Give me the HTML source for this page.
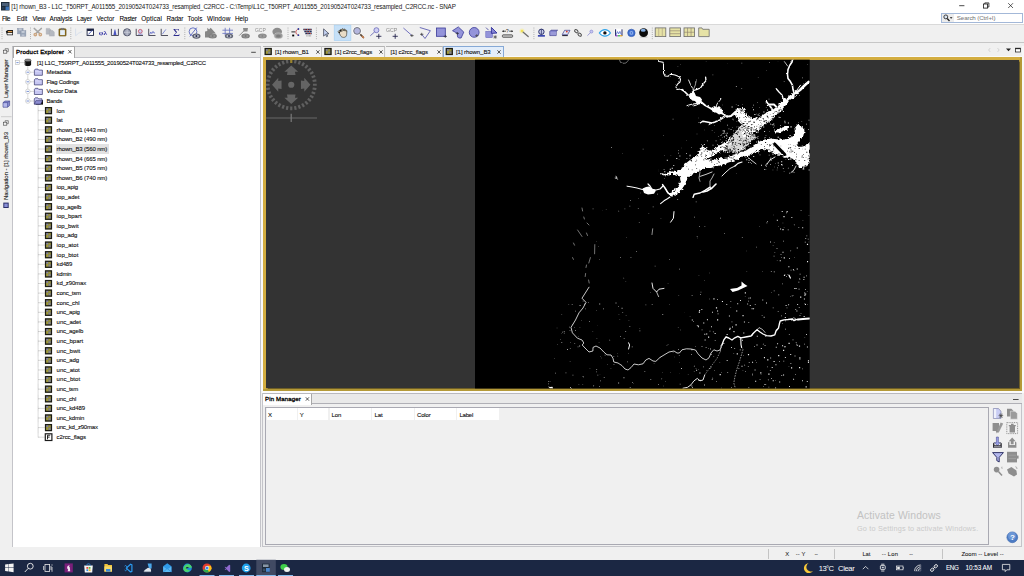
<!DOCTYPE html>
<html>
<head>
<meta charset="utf-8">
<title>SNAP</title>
<style>
html,body{margin:0;padding:0;}
body{width:1024px;height:576px;overflow:hidden;background:#f0f0f0;position:relative;font-family:"Liberation Sans",sans-serif;font-size:6.1px;color:#111;}
.a{position:absolute;}
.t{position:absolute;white-space:nowrap;line-height:1;-webkit-text-stroke:0.11px currentColor;}
svg{position:absolute;overflow:visible;}
#titlebar{left:0;top:0;width:1024px;height:12.5px;background:#fff;}
#menubar{left:0;top:12.5px;width:1024px;height:11.5px;background:#fff;}
#tbline{left:0;top:24px;width:1024px;height:1px;background:#d9d9d9;}
#toolbar{left:0;top:25px;width:1024px;height:17px;background:#f0f0f0;}
#tbline2{left:0;top:42px;width:1024px;height:1px;background:#c6c6c6;}
.menu{top:15.3px;font-size:6.45px;color:#000;}
#pe{left:12.4px;top:56.6px;width:248.7px;height:491.1px;background:#fff;border:1.4px solid #c4c4c9;box-sizing:border-box;}
#petabbar{left:12.4px;top:46.2px;width:248.6px;height:11px;background:#e9e9e9;border-top:0.8px solid #b9b9be;border-left:1.2px solid #c4c4c9;border-right:1.2px solid #c4c4c9;box-sizing:border-box;}
#petab{left:13.4px;top:46.4px;width:61.8px;height:11.2px;background:#fff;border:0.7px solid #a8a8a8;border-bottom:none;box-sizing:border-box;}
.row{position:absolute;white-space:nowrap;font-size:6.0px;line-height:1;color:#111;}
#edtabbar{left:262.4px;top:46.4px;width:759.8px;height:10.8px;background:#f0f0f0;box-sizing:border-box;}
.etab{position:absolute;top:46.4px;height:10.6px;box-sizing:border-box;border-right:0.7px solid #b4b4b4;border-top:0.7px solid #b4b4b4;background:#f3f3f3;}
#pm{left:261.9px;top:392.8px;width:760.6px;height:154.4px;background:#f0f0f0;border:1.2px solid #c4c4c9;box-sizing:border-box;}
#pmbar{left:262.6px;top:393.3px;width:759.2px;height:11.2px;background:#e9e9e9;border-top:0.7px solid #b9b9be;border-bottom:0.8px solid #b0b0b6;box-sizing:border-box;}
#pmtab{left:262.8px;top:393.6px;width:49.6px;height:11px;background:#fff;border-right:0.7px solid #a8a8a8;box-sizing:border-box;}
#taskbar{left:0;top:559.8px;width:1024px;height:16.2px;background:#1b2743;}
</style>
</head>
<body>
<div id="titlebar" class="a"></div><div id="menubar" class="a"></div><div id="tbline" class="a"></div><div id="toolbar" class="a"></div><div id="tbline2" class="a"></div>
<svg style="left:1px;top:2px" width="8.5" height="8.5" viewBox="0 0 17 17"><rect x="0" y="0" width="17" height="17" fill="#1d2b3a"/><rect x="2" y="2" width="13" height="6" fill="#4a5f78"/><rect x="9" y="9" width="7" height="7" fill="#3d74b8"/><rect x="2" y="10" width="5" height="5" fill="#2a3d52"/></svg>
<div class="t" style="left:11.2px;top:3.7px;font-size:6.3px;color:#1a1a1a;letter-spacing:-0.166px;-webkit-text-stroke:0px currentColor;">[1] rhown_B3 - L1C_T50RPT_A011555_20190524T024733_resampled_C2RCC - C:\Temp\L1C_T50RPT_A011555_20190524T024733_resampled_C2RCC.nc - SNAP</div>
<svg style="left:950px;top:0" width="74" height="12" viewBox="0 0 74 12"><g stroke="#1a1a1a" stroke-width="0.8" fill="none"><path d="M9.2 5.7h5.2"/><rect x="33.5" y="4" width="4.1" height="4.1"/><path d="M34.8 4v-1.1h4.1v4.1h-1.3"/><path d="M58.2 3.2l4.8 4.8M63 3.2l-4.8 4.8" stroke-width="0.7"/></g></svg>
<div class="t" style="left:2px;top:16.1px;font-size:6.4px;color:#000;letter-spacing:-0.578px;-webkit-text-stroke:0.06px currentColor;">File</div>
<div class="t" style="left:16.75px;top:16.1px;font-size:6.4px;color:#000;letter-spacing:-0.195px;-webkit-text-stroke:0.06px currentColor;">Edit</div>
<div class="t" style="left:32.4px;top:16.1px;font-size:6.4px;color:#000;letter-spacing:-0.289px;-webkit-text-stroke:0.06px currentColor;">View</div>
<div class="t" style="left:49.5px;top:16.1px;font-size:6.4px;color:#000;letter-spacing:-0.104px;-webkit-text-stroke:0.06px currentColor;">Analysis</div>
<div class="t" style="left:76.75px;top:16.1px;font-size:6.4px;color:#000;letter-spacing:-0.152px;-webkit-text-stroke:0.06px currentColor;">Layer</div>
<div class="t" style="left:96.4px;top:16.1px;font-size:6.4px;color:#000;letter-spacing:-0.007px;-webkit-text-stroke:0.06px currentColor;">Vector</div>
<div class="t" style="left:119.5px;top:16.1px;font-size:6.4px;color:#000;letter-spacing:-0.267px;-webkit-text-stroke:0.06px currentColor;">Raster</div>
<div class="t" style="left:141.25px;top:16.1px;font-size:6.4px;color:#000;letter-spacing:0.119px;-webkit-text-stroke:0.06px currentColor;">Optical</div>
<div class="t" style="left:166.5px;top:16.1px;font-size:6.4px;color:#000;letter-spacing:-0.136px;-webkit-text-stroke:0.06px currentColor;">Radar</div>
<div class="t" style="left:187.5px;top:16.1px;font-size:6.4px;color:#000;letter-spacing:0.012px;-webkit-text-stroke:0.06px currentColor;">Tools</div>
<div class="t" style="left:207px;top:16.1px;font-size:6.4px;color:#000;letter-spacing:0.123px;-webkit-text-stroke:0.06px currentColor;">Window</div>
<div class="t" style="left:235px;top:16.1px;font-size:6.4px;color:#000;letter-spacing:-0.041px;-webkit-text-stroke:0.06px currentColor;">Help</div>
<div class="a" style="left:941px;top:12.7px;width:81.6px;height:10.4px;background:#fff;border:0.8px solid #a3b8d8;box-sizing:border-box;"></div>
<div class="a" style="left:941.8px;top:13.5px;width:12.4px;height:8.8px;background:#ececec;"></div>
<svg style="left:943px;top:14px" width="11" height="8" viewBox="0 0 22 16"><circle cx="5.6" cy="5.8" r="3.9" fill="#dbe6f4" stroke="#222" stroke-width="1.7"/><path d="M8.4 9l4.6 5" stroke="#222" stroke-width="2.6"/><path d="M13.6 6.4h5.4l-2.7 3.2z" fill="#111"/></svg>
<div class="t" style="left:956.8px;top:15.4px;font-size:6.2px;color:#7c7c7c;letter-spacing:-0.119px;-webkit-text-stroke:0.04px currentColor;">Search (Ctrl+I)</div>
<svg style="left:0;top:0" width="1024" height="45" viewBox="0 0 1024 45"><rect x="1.5" y="27.60" width="1" height="0.9" fill="#a9a9a9"/><rect x="1.5" y="29.73" width="1" height="0.9" fill="#a9a9a9"/><rect x="1.5" y="31.86" width="1" height="0.9" fill="#a9a9a9"/><rect x="1.5" y="33.99" width="1" height="0.9" fill="#a9a9a9"/><rect x="1.5" y="36.12" width="1" height="0.9" fill="#a9a9a9"/><rect x="1.5" y="38.25" width="1" height="0.9" fill="#a9a9a9"/><rect x="30.0" y="27.60" width="1" height="0.9" fill="#a9a9a9"/><rect x="30.0" y="29.73" width="1" height="0.9" fill="#a9a9a9"/><rect x="30.0" y="31.86" width="1" height="0.9" fill="#a9a9a9"/><rect x="30.0" y="33.99" width="1" height="0.9" fill="#a9a9a9"/><rect x="30.0" y="36.12" width="1" height="0.9" fill="#a9a9a9"/><rect x="30.0" y="38.25" width="1" height="0.9" fill="#a9a9a9"/><rect x="70.3" y="27.60" width="1" height="0.9" fill="#a9a9a9"/><rect x="70.3" y="29.73" width="1" height="0.9" fill="#a9a9a9"/><rect x="70.3" y="31.86" width="1" height="0.9" fill="#a9a9a9"/><rect x="70.3" y="33.99" width="1" height="0.9" fill="#a9a9a9"/><rect x="70.3" y="36.12" width="1" height="0.9" fill="#a9a9a9"/><rect x="70.3" y="38.25" width="1" height="0.9" fill="#a9a9a9"/><rect x="184.3" y="27.60" width="1" height="0.9" fill="#a9a9a9"/><rect x="184.3" y="29.73" width="1" height="0.9" fill="#a9a9a9"/><rect x="184.3" y="31.86" width="1" height="0.9" fill="#a9a9a9"/><rect x="184.3" y="33.99" width="1" height="0.9" fill="#a9a9a9"/><rect x="184.3" y="36.12" width="1" height="0.9" fill="#a9a9a9"/><rect x="184.3" y="38.25" width="1" height="0.9" fill="#a9a9a9"/><rect x="287.5" y="27.60" width="1" height="0.9" fill="#a9a9a9"/><rect x="287.5" y="29.73" width="1" height="0.9" fill="#a9a9a9"/><rect x="287.5" y="31.86" width="1" height="0.9" fill="#a9a9a9"/><rect x="287.5" y="33.99" width="1" height="0.9" fill="#a9a9a9"/><rect x="287.5" y="36.12" width="1" height="0.9" fill="#a9a9a9"/><rect x="287.5" y="38.25" width="1" height="0.9" fill="#a9a9a9"/><rect x="315.9" y="27.60" width="1" height="0.9" fill="#a9a9a9"/><rect x="315.9" y="29.73" width="1" height="0.9" fill="#a9a9a9"/><rect x="315.9" y="31.86" width="1" height="0.9" fill="#a9a9a9"/><rect x="315.9" y="33.99" width="1" height="0.9" fill="#a9a9a9"/><rect x="315.9" y="36.12" width="1" height="0.9" fill="#a9a9a9"/><rect x="315.9" y="38.25" width="1" height="0.9" fill="#a9a9a9"/><rect x="533.4" y="27.60" width="1" height="0.9" fill="#a9a9a9"/><rect x="533.4" y="29.73" width="1" height="0.9" fill="#a9a9a9"/><rect x="533.4" y="31.86" width="1" height="0.9" fill="#a9a9a9"/><rect x="533.4" y="33.99" width="1" height="0.9" fill="#a9a9a9"/><rect x="533.4" y="36.12" width="1" height="0.9" fill="#a9a9a9"/><rect x="533.4" y="38.25" width="1" height="0.9" fill="#a9a9a9"/><rect x="651.8" y="27.60" width="1" height="0.9" fill="#a9a9a9"/><rect x="651.8" y="29.73" width="1" height="0.9" fill="#a9a9a9"/><rect x="651.8" y="31.86" width="1" height="0.9" fill="#a9a9a9"/><rect x="651.8" y="33.99" width="1" height="0.9" fill="#a9a9a9"/><rect x="651.8" y="36.12" width="1" height="0.9" fill="#a9a9a9"/><rect x="651.8" y="38.25" width="1" height="0.9" fill="#a9a9a9"/><rect x="334.2" y="25.1" width="16.7" height="15.5" fill="#c6e0f7" stroke="#a4cff3" stroke-width="0.6"/><path d="M5.8 31.2l2-1.3h5.2v5.4h-6z" fill="#1a1a1a"/><path d="M7.9 31.1h4.3v1.2h-4.3z" fill="#e0a050"/><path d="M7.4 33h4.9v1.5h-4.9z" fill="#f4f4f4"/><g fill="#9aa6b8" stroke="#8490a4" stroke-width="0.4"><rect x="17.5" y="28.3" width="5.6" height="5.6"/><rect x="20.3" y="30.6" width="5.6" height="5.6"/></g><rect x="18.7" y="28.5" width="3" height="2" fill="#c5ccd8"/><rect x="21.6" y="30.9" width="3" height="2" fill="#c5ccd8"/><rect x="21.8" y="34.4" width="2.6" height="1.6" fill="#b8c0cf"/><g stroke-linecap="round" fill="none"><path d="M34.3 28.5l5.4 5M41.3 28.5l-5.4 5" stroke="#a6a6a6" stroke-width="1.7"/><circle cx="35.3" cy="34.6" r="1.2" stroke="#cda680" stroke-width="1.4"/><circle cx="40.3" cy="34.6" r="1.2" stroke="#cda680" stroke-width="1.4"/></g><g fill="#b4b8c0" stroke="#a2a6ae" stroke-width="0.4"><path d="M46.2 28.4h3.4l1.4 1.4v4.4h-4.8z"/><path d="M49.4 30.6h3.4l1.5 1.5v4h-4.9z"/></g><rect x="58.9" y="28.8" width="7.2" height="7.3" rx="0.8" fill="#8a6c1c" stroke="#5e480e" stroke-width="0.5"/><rect x="60.1" y="30.1" width="4.8" height="5" fill="#e4eef8"/><rect x="61" y="28.1" width="3" height="1.6" fill="#8c8c8c" stroke="#555" stroke-width="0.3"/><path d="M75.6 28.6v7.2M75.6 35.8l3-2.6 3.6-1.6" stroke="#cdd8ea" stroke-width="0.7" fill="none"/><rect x="87.1" y="29" width="6.4" height="6.4" fill="#fff" stroke="#1c2340" stroke-width="0.9"/><path d="M87.1 29h6.4v2h-6.4z" fill="#1c2340"/><path d="M88.4 34.4l4.2-4.4" stroke="#4a5ab0" stroke-width="1"/><text opacity="0.99" x="98.8" y="35" font-family="Liberation Serif" font-size="7" font-weight="bold" fill="#3636a6" textLength="8.3" lengthAdjust="spacingAndGlyphs">φλ</text><path d="M111.4 28.8v6.7h7v-6.7" fill="none" stroke="#2a2a3a" stroke-width="0.8"/><path d="M113.4 35.1l1.2-5.6h0.7l1.2 5.6z" fill="#4a54c0"/><circle cx="127.1" cy="32.3" r="3.6" fill="#9fa4b6" stroke="#3a3f55" stroke-width="0.8"/><path d="M127.1 28.8v7M123.6 32.3h7" stroke="#d6d9e4" stroke-width="0.6"/><path d="M136.2 28.8v6.7h6.8" fill="none" stroke="#2a2a3a" stroke-width="0.8"/><circle cx="140.3" cy="31.3" r="1.9" fill="#c8d0f0" stroke="#c0304a" stroke-width="0.7"/><path d="M138 34.2h4.6" stroke="#4a54c0" stroke-width="0.6"/><path d="M148.7 28.8v6.7h6.8" fill="none" stroke="#2a2a3a" stroke-width="0.8"/><path d="M149.6 34.6l1.2-2.6 1 1.6 1.2-2.2 1 1.8 0.9-0.6" fill="none" stroke="#4a54c0" stroke-width="0.7"/><path d="M161.2 28.8v6.7h6.8" fill="none" stroke="#2a2a3a" stroke-width="0.8"/><path d="M162.3 34.2l3.6-4.8" stroke="#6a78d0" stroke-width="0.8"/><text opacity="0.99" x="173" y="36" font-family="Liberation Serif" font-size="9.6" fill="#2b2b8c" textLength="7" lengthAdjust="spacingAndGlyphs">Σ</text><circle cx="193" cy="31.7" r="3.9" fill="none" stroke="#5c6ac0" stroke-width="0.9"/><path d="M189.8 36.4l7-8.8" stroke="#5c6ac0" stroke-width="0.9"/><ellipse cx="196.4" cy="36.1" rx="4.1" ry="2.6" fill="#5c6070"/><ellipse cx="196.4" cy="36.1" rx="2.542" ry="1.56" fill="#c0c4d0"/><circle cx="196.4" cy="36.1" r="1.04" fill="#2a2f55"/><path d="M205 31.4l2.3-0.4v-3.2l1.8 1.8 1.6-1.8 5.2 5.6h-3.4v2.6l-2.2 1.6h-5.3z" fill="#868686"/><ellipse cx="212.6" cy="36.1" rx="4.3" ry="2.5" fill="#808080"/><ellipse cx="212.6" cy="36.1" rx="2.666" ry="1.5" fill="#959595"/><circle cx="212.6" cy="36.1" r="1.0" fill="#787878"/><path d="M222.4 30.2h10.6M222.4 33.4h10.6M225.2 27.8v7.6M229.6 27.8v7.6" stroke="#6470bf" stroke-width="0.8"/><ellipse cx="229" cy="36.1" rx="4.2" ry="2.5" fill="#666a78"/><ellipse cx="229" cy="36.1" rx="2.604" ry="1.5" fill="#b4b8c4"/><circle cx="229" cy="36.1" r="1.0" fill="#30345a"/><path d="M239.2 35.6l4.6-4.6" stroke="#8a8a8a" stroke-width="1"/><path d="M243 27.9h5l-0.6 3.6h-3.8z" fill="#8a8a8a"/><ellipse cx="245.6" cy="36.1" rx="4.3" ry="2.5" fill="#808080"/><ellipse cx="245.6" cy="36.1" rx="2.666" ry="1.5" fill="#959595"/><circle cx="245.6" cy="36.1" r="1.0" fill="#787878"/><text x="255" y="32.1" font-size="5.2" fill="#8c8c8c" opacity="0.99" textLength="10.8" lengthAdjust="spacingAndGlyphs">GCP</text><ellipse cx="262.4" cy="36" rx="4.4" ry="2.5" fill="#8c8c8c"/><ellipse cx="262.4" cy="36" rx="2.728" ry="1.5" fill="#9c9c9c"/><circle cx="262.4" cy="36" r="1.0" fill="#858585"/><ellipse cx="277.2" cy="31.8" rx="4.8" ry="4" fill="#8c8c8c"/><ellipse cx="278.4" cy="35.8" rx="4.4" ry="2.9" fill="#9a9a9a" stroke="#d4d4d4" stroke-width="0.5"/><ellipse cx="278.4" cy="35.9" rx="2.4" ry="1.5" fill="#7c7c7c"/><path d="M291.4 31.9h4" stroke="#111" stroke-width="0.9"/><path d="M298.6 29.1c-3.6 0.4-3.6 5.6 0 6" fill="none" stroke="#c84040" stroke-width="0.8"/><rect x="292.2" y="34.6" width="2" height="1.8" fill="#000"/><circle cx="298.4" cy="29" r="0.9" fill="#2a3a9a"/><circle cx="298.4" cy="35.2" r="0.9" fill="#2a3a9a"/><g><path d="M303.3 29.5h8.4M304.3 31.5h7.4M305.3 33.5h6.4" stroke="#26305a" stroke-width="1.5"/><path d="M304.4 29.5h1M307 29.5h1M309.6 29.5h1M306.4 31.5h1M309 31.5h1M307.4 33.5h1M310 33.5h1" stroke="#d0503a" stroke-width="1.1"/><path d="M306.4 35.9h5.2" stroke="#555" stroke-width="0.7" stroke-dasharray="0.8 0.5"/></g><path d="M323.6 28.9v7.2l1.9-1.8 1.1 2.4 1.1-0.5-1.1-2.4h2.4z" fill="#c6d4f4" stroke="#34384a" stroke-width="0.7" stroke-linejoin="round"/><path d="M339.6 33.8l-1.3-1.6c-0.6-0.8 0.3-1.7 1.1-1.1l0.5 0.3c-0.3-1.6 0.9-2.4 1.7-1.6 0.2-1.2 1.6-1.3 2-0.3 0.7-0.8 1.9-0.3 1.9 0.7 0.8-0.3 1.5 0.3 1.4 1.2l-0.3 3.4c-0.2 1.7-1.2 2.6-2.9 2.6-1.6 0-2.6-0.7-3.2-1.8z" fill="#e9dcc6" stroke="#4a463e" stroke-width="0.7"/><path d="M339.2 31.4c0.2-1.7 1.6-2.6 2.4-1.8 0.2-1.2 1.6-1.3 2-0.3 0.7-0.8 1.9-0.3 1.9 0.7 0.8-0.3 1.5 0.3 1.4 1.2l-0.1 1.2c-1.4-1.4-3.2-1.6-4.6-0.9-1 0.5-1.8 0.7-3 -0.1z" fill="#6c665a"/><circle cx="340.4" cy="30.6" r="0.7" fill="#111"/><circle cx="339.4" cy="32.6" r="0.7" fill="#111"/><circle cx="342.6" cy="29.9" r="0.5" fill="#d8d4b0"/><circle cx="345.6" cy="31.6" r="0.5" fill="#d8d4b0"/><path d="M359.6 33.6l3.8 3.9" stroke="#5e4a38" stroke-width="1.7" stroke-linecap="round"/><path d="M362.6 36.7l0.8 0.8" stroke="#c47a4a" stroke-width="1.7" stroke-linecap="round"/><circle cx="357.1" cy="30.9" r="3.9" fill="none" stroke="#fff" stroke-width="1.4"/><circle cx="357.1" cy="30.9" r="3.4" fill="#b4b6de" stroke="#74767e" stroke-width="1"/><path d="M370.3 35.8l4.4-4" stroke="#5a5ab0" stroke-width="0.8"/><circle cx="376.4" cy="30.2" r="2.5" fill="#cfcff4" stroke="#5a5ab0" stroke-width="0.7"/><path d="M376.2 36.3h5.2M378.8 33.8v5" stroke="#26264e" stroke-width="0.9"/><text x="386" y="31.9" font-size="5.2" fill="#868686" opacity="0.99" textLength="11.3" lengthAdjust="spacingAndGlyphs">GCP</text><path d="M392.6 36.3h5.2M395.2 33.8v5" stroke="#26264e" stroke-width="0.9"/><path d="M403.4 28l8.4 7.4" stroke="#5252b2" stroke-width="0.8"/><path d="M410.2 35.6h3.4M411.9 34.2v2.8" stroke="#333" stroke-width="0.7"/><path d="M419.8 27.5l10.6 3.2-5.4 7.8-3.3-4.2" fill="none" stroke="#4c4caa" stroke-width="0.8"/><path d="M420 34.3h3.4M421.7 32.8v3" stroke="#333" stroke-width="0.7"/><rect x="436.5" y="28" width="8.8" height="8.3" fill="#9494da" stroke="#3a3a98" stroke-width="0.8"/><path d="M443.6 36.4h3.4M445.3 34.9v3" stroke="#2a2a3a" stroke-width="0.7"/><path d="M452.5 30.7l5.8-3.8 5.5 5.2-2.7 5.9h-2.4c-1.6-1-1.6-3-0.8-4.4z" fill="#9494da" stroke="#3a3a98" stroke-width="0.8" stroke-linejoin="round"/><path d="M455.7 33.4h3.2M457.3 32v2.9" stroke="#2a2a3a" stroke-width="0.7"/><circle cx="474.2" cy="32.4" r="4.9" fill="#9494da" stroke="#3a3a98" stroke-width="0.8"/><path d="M475.2 35.6h3.2M476.8 34.1v3" stroke="#444" stroke-width="0.7"/><path d="M486 27.6l2.6 2.6" stroke="#3a3a98" stroke-width="0.8"/><rect x="485.8" y="31.4" width="6.6" height="6.2" fill="#9494da" stroke="#5a5ab8" stroke-width="0.5"/><path d="M491.4 27.4v6l5.6-0.4z" fill="#8484d4" stroke="#30309a" stroke-width="0.9" stroke-linejoin="round"/><path d="M493.4 37h3.6M495.2 35.2v3.6M493.9 35.7l2.6 2.6M496.5 35.7l-2.6 2.6" stroke="#555" stroke-width="0.7"/><rect x="501.8" y="34.2" width="11.4" height="3.6" rx="1" fill="#fff"/><rect x="502.4" y="34.8" width="10.2" height="2.5" rx="0.7" fill="#c4c4c4" stroke="#2a2a2a" stroke-width="0.7"/><path d="M502.4 31.2h3.6M509.2 31.2h3.6" stroke="#111" stroke-width="0.7"/><path d="M502.2 31.2l1.5-1v2zM513 31.2l-1.5-1v2z" fill="#111"/><text x="506" y="32.6" font-size="4.8" fill="#111">?</text><circle cx="522" cy="31" r="2.6" fill="#f7ee9a" opacity="0.55"/><circle cx="522" cy="31" r="1.3" fill="#f2e25a"/><path d="M523.2 32.2l5 4.4" stroke="#6e6e6e" stroke-width="1.3" stroke-linecap="round"/><circle cx="541.4" cy="31.8" r="2.7" fill="#c6cbe8" stroke="#1c2260" stroke-width="0.9"/><path d="M541.4 29.2v5.2" stroke="#1c2260" stroke-width="0.7"/><rect x="537.9" y="35" width="7" height="1.7" fill="#3c48b0"/><path d="M551 30.2h6.6l-1.4 1.2v4.2h-6.4v-4.2z" fill="#7878c8" stroke="#3c3c8c" stroke-width="0.7"/><path d="M550.3 31.6h5.8v3.6h-5.8z" fill="#9a9ad8"/><path d="M564.6 30.3h5.4l-2.4 4.4h-5.4z" fill="#dfe4f4" stroke="#3c3c8c" stroke-width="0.7"/><path d="M562.2 35.6h5.6" stroke="#1a1a2a" stroke-width="1"/><circle cx="566.8" cy="31.6" r="0.9" fill="#d83a2a"/><g fill="none" stroke="#4a4a4a" stroke-width="1.05"><ellipse cx="576.3" cy="31.2" rx="1.9" ry="1.3" transform="rotate(40 576.3 31.2)"/><ellipse cx="579.7" cy="34.6" rx="1.9" ry="1.3" transform="rotate(40 579.7 34.6)"/></g><path d="M577.2 32.1l1.7 1.7" stroke="#888" stroke-width="0.9"/><path d="M587.4 35.7l3.4-3.4" stroke="#8a8ad0" stroke-width="0.8"/><circle cx="591.4" cy="31.6" r="1.5" fill="#c8c8f2" stroke="#8080cc" stroke-width="0.6"/><path d="M599.3 33c3.2-4.4 8.2-4.4 11.2 0-3 4.2-8 4.2-11.2 0z" fill="#fff" stroke="#31a4ea" stroke-width="1.2"/><circle cx="604.9" cy="32.9" r="1.7" fill="#111"/><rect x="614.6" y="28.6" width="8.4" height="8" fill="#fff"/><path d="M615.6 29.3v6.6M622 29.3v6.6" stroke="#1c2260" stroke-width="1"/><path d="M616.3 34.6l1.2-3 1.2 2.2 1.2-2.4 1.3 3.2" fill="none" stroke="#3a58c8" stroke-width="0.7"/><rect x="615.4" y="35.2" width="2.3" height="1.2" fill="#8a2ad0"/><rect x="617.7" y="35.2" width="2.3" height="1.2" fill="#28b040"/><rect x="620" y="35.2" width="2.4" height="1.2" fill="#e0a020"/><circle cx="631.4" cy="32.9" r="3.7" fill="#3f6fd0" stroke="#2a50a8" stroke-width="0.6"/><circle cx="631.4" cy="32.9" r="1.9" fill="#8fb0ec"/><circle cx="631.4" cy="32.9" r="0.8" fill="#3f6fd0"/><ellipse cx="643.6" cy="37" rx="4" ry="0.9" fill="#d0d0d0"/><circle cx="643.6" cy="32.7" r="4.4" fill="#0a0a0a"/><ellipse cx="643.2" cy="30.2" rx="2.5" ry="1.5" fill="#86b0e4"/><rect x="655.2" y="27.9" width="10.6" height="8.7" fill="#e6e2a6" stroke="#6c6c6c" stroke-width="0.8"/><path d="M658.7333333333333 27.9v8.7M662.2666666666668 27.9v8.7" stroke="#a89a80" stroke-width="0.6"/><rect x="669.8" y="27.9" width="10.6" height="8.7" fill="#e6e2a6" stroke="#6c6c6c" stroke-width="0.8"/><path d="M669.8 30.799999999999997h10.6M669.8 33.699999999999996h10.6" stroke="#8a7a6a" stroke-width="0.6"/><rect x="684" y="27.9" width="10.6" height="8.7" fill="#e6e2a6" stroke="#6c6c6c" stroke-width="0.8"/><path d="M684 32.25h10.6M687.5333333333333 27.9v8.7M691.0666666666667 27.9v8.7" stroke="#8a7a6a" stroke-width="0.6"/><path d="M698.7 27.9h3.2l0.8 1.4h6.5v7.3h-10.5z" fill="#e6e2a6" stroke="#6c6c6c" stroke-width="0.8"/></svg>
<svg style="left:0;top:0" width="13" height="576" viewBox="0 0 13 576"><g fill="none" stroke="#444" stroke-width="0.6"><rect x="3.6" y="50.2" width="3.2" height="3"/><path d="M5.1 50.2v-1.5h3.2v3h-1.5"/></g><g fill="none" stroke="#444" stroke-width="0.6"><rect x="3.6" y="122.19999999999999" width="3.2" height="3"/><path d="M5.1 122.19999999999999v-1.5h3.2v3h-1.5"/></g><path d="M1 116.7h10.6" stroke="#bdbdbd" stroke-width="0.7"/><path d="M3 102.6l2-1.6h4.6v4.6l-2 1.6h-4.6z" fill="#8a8fd0" stroke="#3a3f8a" stroke-width="0.6"/><path d="M3 102.6h4.6v4.6M7.6 102.6l2-1.6" fill="none" stroke="#3a3f8a" stroke-width="0.5"/><rect x="3.5" y="103.2" width="3.6" height="3.5" fill="#b4b8ea"/><rect x="3.3" y="202.6" width="5.4" height="5.4" fill="#2a2f6a"/><rect x="4.3" y="203.6" width="3.4" height="3.4" fill="#8a90d8"/></svg>
<div class="t" style="left:6.3px;top:98px;font-size:6.0px;letter-spacing:-0.151px;transform-origin:0 0;transform:rotate(-90deg) translateY(-50%);color:#1a1a1a;">Layer Manager</div>
<div class="t" style="left:6.3px;top:199.8px;font-size:6.0px;letter-spacing:-0.042px;transform-origin:0 0;transform:rotate(-90deg) translateY(-50%);color:#1a1a1a;">Navigation - [1] rhown_B3</div>
<div id="petabbar" class="a"></div><div id="pe" class="a"></div><div id="petab" class="a"></div>
<div class="t" style="left:16px;top:49.3px;font-size:6.1px;color:#000;letter-spacing:0.179px;-webkit-text-stroke:0.3px currentColor;">Product Explorer</div>
<svg style="left:0;top:0" width="262" height="60" viewBox="0 0 262 60"><path d="M68.3 50l3.2 3.4M71.5 50l-3.2 3.4" stroke="#222" stroke-width="0.75"/><path d="M251.2 52.3h4.6" stroke="#222" stroke-width="0.8"/></svg>
<div class="t" style="left:37px;top:59.5px;font-size:6.0px;color:#111;letter-spacing:-0.224px;">[1] L1C_T50RPT_A011555_20190524T024733_resampled_C2RCC</div>
<div class="t" style="left:46.6px;top:69.105px;font-size:6.0px;color:#111;letter-spacing:-0.077px;">Metadata</div>
<div class="t" style="left:46.6px;top:78.71000000000001px;font-size:6.0px;color:#111;letter-spacing:-0.246px;">Flag Codings</div>
<div class="t" style="left:46.6px;top:88.31500000000001px;font-size:6.0px;color:#111;letter-spacing:-0.096px;">Vector Data</div>
<div class="t" style="left:46.6px;top:97.92000000000002px;font-size:6.0px;color:#111;letter-spacing:-0.343px;">Bands</div>
<div class="t" style="left:56.6px;top:107.53px;font-size:6.0px;color:#111;letter-spacing:-0.036px;">lon</div>
<div class="t" style="left:56.6px;top:117.13px;font-size:6.0px;color:#111;letter-spacing:-0.079px;">lat</div>
<div class="t" style="left:56.6px;top:126.74px;font-size:6.0px;color:#111;letter-spacing:-0.129px;">rhown_B1 (443 nm)</div>
<div class="t" style="left:56.6px;top:136.34px;font-size:6.0px;color:#111;letter-spacing:-0.129px;">rhown_B2 (490 nm)</div>
<div class="a" style="left:55.8px;top:144.35px;width:53px;height:9.5px;background:#e2e2e2;"></div>
<div class="t" style="left:56.6px;top:145.95px;font-size:6.0px;color:#111;letter-spacing:-0.129px;">rhown_B3 (560 nm)</div>
<div class="t" style="left:56.6px;top:155.55px;font-size:6.0px;color:#111;letter-spacing:-0.129px;">rhown_B4 (665 nm)</div>
<div class="t" style="left:56.6px;top:165.16px;font-size:6.0px;color:#111;letter-spacing:-0.129px;">rhown_B5 (705 nm)</div>
<div class="t" style="left:56.6px;top:174.76px;font-size:6.0px;color:#111;letter-spacing:-0.129px;">rhown_B6 (740 nm)</div>
<div class="t" style="left:56.6px;top:184.37px;font-size:6.0px;color:#111;letter-spacing:-0.161px;">iop_apig</div>
<div class="t" style="left:56.6px;top:193.97px;font-size:6.0px;color:#111;letter-spacing:-0.028px;">iop_adet</div>
<div class="t" style="left:56.6px;top:203.58px;font-size:6.0px;color:#111;letter-spacing:-0.147px;">iop_agelb</div>
<div class="t" style="left:56.6px;top:213.18px;font-size:6.0px;color:#111;letter-spacing:-0.002px;">iop_bpart</div>
<div class="t" style="left:56.6px;top:222.78px;font-size:6.0px;color:#111;letter-spacing:0.011px;">iop_bwit</div>
<div class="t" style="left:56.6px;top:232.39px;font-size:6.0px;color:#111;letter-spacing:-0.094px;">iop_adg</div>
<div class="t" style="left:56.6px;top:242.0px;font-size:6.0px;color:#111;letter-spacing:0.056px;">iop_atot</div>
<div class="t" style="left:56.6px;top:251.6px;font-size:6.0px;color:#111;letter-spacing:0.056px;">iop_btot</div>
<div class="t" style="left:56.6px;top:261.2px;font-size:6.0px;color:#111;letter-spacing:-0.15px;">kd489</div>
<div class="t" style="left:56.6px;top:270.81px;font-size:6.0px;color:#111;letter-spacing:-0.241px;">kdmin</div>
<div class="t" style="left:56.6px;top:280.42px;font-size:6.0px;color:#111;letter-spacing:-0.143px;">kd_z90max</div>
<div class="t" style="left:56.6px;top:290.02px;font-size:6.0px;color:#111;letter-spacing:-0.172px;">conc_tsm</div>
<div class="t" style="left:56.6px;top:299.62px;font-size:6.0px;color:#111;letter-spacing:-0.11px;">conc_chl</div>
<div class="t" style="left:56.6px;top:309.23px;font-size:6.0px;color:#111;letter-spacing:-0.144px;">unc_apig</div>
<div class="t" style="left:56.6px;top:318.84px;font-size:6.0px;color:#111;letter-spacing:-0.049px;">unc_adet</div>
<div class="t" style="left:56.6px;top:328.44px;font-size:6.0px;color:#111;letter-spacing:-0.132px;">unc_agelb</div>
<div class="t" style="left:56.6px;top:338.05px;font-size:6.0px;color:#111;letter-spacing:-0.021px;">unc_bpart</div>
<div class="t" style="left:56.6px;top:347.65px;font-size:6.0px;color:#111;letter-spacing:-0.01px;">unc_bwit</div>
<div class="t" style="left:56.6px;top:357.25px;font-size:6.0px;color:#111;letter-spacing:-0.075px;">unc_adg</div>
<div class="t" style="left:56.6px;top:366.86px;font-size:6.0px;color:#111;letter-spacing:0.023px;">unc_atot</div>
<div class="t" style="left:56.6px;top:376.47px;font-size:6.0px;color:#111;letter-spacing:0.073px;">unc_btot</div>
<div class="t" style="left:56.6px;top:386.07px;font-size:6.0px;color:#111;letter-spacing:-0.182px;">unc_tsm</div>
<div class="t" style="left:56.6px;top:395.68px;font-size:6.0px;color:#111;letter-spacing:-0.154px;">unc_chl</div>
<div class="t" style="left:56.6px;top:405.28px;font-size:6.0px;color:#111;letter-spacing:-0.118px;">unc_kd489</div>
<div class="t" style="left:56.6px;top:414.88px;font-size:6.0px;color:#111;letter-spacing:-0.157px;">unc_kdmin</div>
<div class="t" style="left:56.6px;top:424.49px;font-size:6.0px;color:#111;letter-spacing:-0.2px;">unc_kd_z90max</div>
<div class="t" style="left:56.6px;top:434.1px;font-size:6.0px;color:#111;letter-spacing:-0.086px;">c2rcc_flags</div>
<svg style="left:0;top:0" width="262" height="450" viewBox="0 0 262 450"><path d="M27.8 66.1V98.62" stroke="#808080" stroke-width="0.6" stroke-dasharray="0.55 0.55"/><path d="M19.6 62.6H24.5" stroke="#808080" stroke-width="0.6" stroke-dasharray="0.55 0.55"/><path d="M38.1 104.62V437.19500000000005" stroke="#808080" stroke-width="0.6" stroke-dasharray="0.55 0.55"/><rect x="15.4" y="60.5" width="4.1" height="4.1" fill="#fff" stroke="#b4b4b4" stroke-width="0.55"/><path d="M16.4 62.6h2.2" stroke="#4468c8" stroke-width="0.7"/><path d="M24.7 60.4v4.4c0 1.6 6.4 1.6 6.4 0v-4.4z" fill="#111"/><ellipse cx="27.9" cy="60.300000000000004" rx="3.2" ry="1.3" fill="#8d8d8d" stroke="#222" stroke-width="0.4"/><path d="M25.4 61.800000000000004v3.6" stroke="#666" stroke-width="0.6"/><path d="M30.4 72.205H34" stroke="#808080" stroke-width="0.6" stroke-dasharray="0.55 0.55"/><circle cx="27.8" cy="72.205" r="2.3" fill="#fff" stroke="#b8b8b8" stroke-width="0.55"/><path d="M26.5 72.205h2.6" stroke="#5a78cc" stroke-width="0.8"/><path d="M34.4 70.105l0.9-1h2.6l0.8 1h3.7v5.2h-8z" fill="#c6c6f2" stroke="#2a2a62" stroke-width="0.65" stroke-linejoin="round"/><path d="M35.2 71.30499999999999h6.4" stroke="#e6e6fb" stroke-width="0.6"/><path d="M30.4 81.81H34" stroke="#808080" stroke-width="0.6" stroke-dasharray="0.55 0.55"/><circle cx="27.8" cy="81.81" r="2.3" fill="#fff" stroke="#b8b8b8" stroke-width="0.55"/><path d="M26.5 81.81h2.6" stroke="#5a78cc" stroke-width="0.8"/><path d="M34.4 79.71000000000001l0.9-1h2.6l0.8 1h3.7v5.2h-8z" fill="#c6c6f2" stroke="#2a2a62" stroke-width="0.65" stroke-linejoin="round"/><path d="M35.2 80.91h6.4" stroke="#e6e6fb" stroke-width="0.6"/><path d="M30.4 91.415H34" stroke="#808080" stroke-width="0.6" stroke-dasharray="0.55 0.55"/><circle cx="27.8" cy="91.415" r="2.3" fill="#fff" stroke="#b8b8b8" stroke-width="0.55"/><path d="M26.5 91.415h2.6" stroke="#5a78cc" stroke-width="0.8"/><path d="M34.4 89.31500000000001l0.9-1h2.6l0.8 1h3.7v5.2h-8z" fill="#c6c6f2" stroke="#2a2a62" stroke-width="0.65" stroke-linejoin="round"/><path d="M35.2 90.515h6.4" stroke="#e6e6fb" stroke-width="0.6"/><path d="M30.4 101.02000000000001H34" stroke="#808080" stroke-width="0.6" stroke-dasharray="0.55 0.55"/><circle cx="27.8" cy="101.02000000000001" r="2.3" fill="#fff" stroke="#b8b8b8" stroke-width="0.55"/><path d="M26.5 101.02000000000001h2.6" stroke="#5a78cc" stroke-width="0.8"/><path d="M36 100.02000000000001h7v4.6h-7z" fill="#111"/><path d="M34.3 98.82000000000001l0.9-1h2.6l0.8 1h3.4v1.8l-1.6 3.6h-6.1z" fill="#c6c6f2" stroke="#2a2a62" stroke-width="0.65" stroke-linejoin="round"/><path d="M34.4 104.02000000000001l1.5-3.4h6.6l-1.8 3.4z" fill="#8c8cd0" stroke="#2a2a62" stroke-width="0.5"/><path d="M38.4 110.625H45" stroke="#808080" stroke-width="0.6" stroke-dasharray="0.55 0.55"/><rect x="45" y="107.125" width="7" height="7" fill="#7f7d5a"/><rect x="46" y="110.025" width="2.2" height="3" fill="#a09a3a"/><rect x="48.4" y="108.025" width="2.4" height="2.4" fill="#99933c"/><rect x="46.2" y="108.025" width="1.8" height="1.8" fill="#8585ac"/><rect x="48.6" y="110.825" width="2.2" height="2.2" fill="#86868e"/><rect x="45.5" y="107.625" width="6" height="6" fill="none" stroke="#1c1c14" stroke-width="1.2"/><path d="M38.4 120.23H45" stroke="#808080" stroke-width="0.6" stroke-dasharray="0.55 0.55"/><rect x="45" y="116.73" width="7" height="7" fill="#7f7d5a"/><rect x="46" y="119.63000000000001" width="2.2" height="3" fill="#a09a3a"/><rect x="48.4" y="117.63000000000001" width="2.4" height="2.4" fill="#99933c"/><rect x="46.2" y="117.63000000000001" width="1.8" height="1.8" fill="#8585ac"/><rect x="48.6" y="120.43" width="2.2" height="2.2" fill="#86868e"/><rect x="45.5" y="117.23" width="6" height="6" fill="none" stroke="#1c1c14" stroke-width="1.2"/><path d="M38.4 129.835H45" stroke="#808080" stroke-width="0.6" stroke-dasharray="0.55 0.55"/><rect x="45" y="126.33500000000001" width="7" height="7" fill="#7f7d5a"/><rect x="46" y="129.235" width="2.2" height="3" fill="#a09a3a"/><rect x="48.4" y="127.23500000000001" width="2.4" height="2.4" fill="#99933c"/><rect x="46.2" y="127.23500000000001" width="1.8" height="1.8" fill="#8585ac"/><rect x="48.6" y="130.035" width="2.2" height="2.2" fill="#86868e"/><rect x="45.5" y="126.83500000000001" width="6" height="6" fill="none" stroke="#1c1c14" stroke-width="1.2"/><path d="M38.4 139.44H45" stroke="#808080" stroke-width="0.6" stroke-dasharray="0.55 0.55"/><rect x="45" y="135.94" width="7" height="7" fill="#7f7d5a"/><rect x="46" y="138.84" width="2.2" height="3" fill="#a09a3a"/><rect x="48.4" y="136.84" width="2.4" height="2.4" fill="#99933c"/><rect x="46.2" y="136.84" width="1.8" height="1.8" fill="#8585ac"/><rect x="48.6" y="139.64" width="2.2" height="2.2" fill="#86868e"/><rect x="45.5" y="136.44" width="6" height="6" fill="none" stroke="#1c1c14" stroke-width="1.2"/><path d="M38.4 149.04500000000002H45" stroke="#808080" stroke-width="0.6" stroke-dasharray="0.55 0.55"/><rect x="45" y="145.54500000000002" width="7" height="7" fill="#7f7d5a"/><rect x="46" y="148.44500000000002" width="2.2" height="3" fill="#a09a3a"/><rect x="48.4" y="146.44500000000002" width="2.4" height="2.4" fill="#99933c"/><rect x="46.2" y="146.44500000000002" width="1.8" height="1.8" fill="#8585ac"/><rect x="48.6" y="149.245" width="2.2" height="2.2" fill="#86868e"/><rect x="45.5" y="146.04500000000002" width="6" height="6" fill="none" stroke="#1c1c14" stroke-width="1.2"/><path d="M38.4 158.65H45" stroke="#808080" stroke-width="0.6" stroke-dasharray="0.55 0.55"/><rect x="45" y="155.15" width="7" height="7" fill="#7f7d5a"/><rect x="46" y="158.05" width="2.2" height="3" fill="#a09a3a"/><rect x="48.4" y="156.05" width="2.4" height="2.4" fill="#99933c"/><rect x="46.2" y="156.05" width="1.8" height="1.8" fill="#8585ac"/><rect x="48.6" y="158.85" width="2.2" height="2.2" fill="#86868e"/><rect x="45.5" y="155.65" width="6" height="6" fill="none" stroke="#1c1c14" stroke-width="1.2"/><path d="M38.4 168.255H45" stroke="#808080" stroke-width="0.6" stroke-dasharray="0.55 0.55"/><rect x="45" y="164.755" width="7" height="7" fill="#7f7d5a"/><rect x="46" y="167.655" width="2.2" height="3" fill="#a09a3a"/><rect x="48.4" y="165.655" width="2.4" height="2.4" fill="#99933c"/><rect x="46.2" y="165.655" width="1.8" height="1.8" fill="#8585ac"/><rect x="48.6" y="168.45499999999998" width="2.2" height="2.2" fill="#86868e"/><rect x="45.5" y="165.255" width="6" height="6" fill="none" stroke="#1c1c14" stroke-width="1.2"/><path d="M38.4 177.86H45" stroke="#808080" stroke-width="0.6" stroke-dasharray="0.55 0.55"/><rect x="45" y="174.36" width="7" height="7" fill="#7f7d5a"/><rect x="46" y="177.26000000000002" width="2.2" height="3" fill="#a09a3a"/><rect x="48.4" y="175.26000000000002" width="2.4" height="2.4" fill="#99933c"/><rect x="46.2" y="175.26000000000002" width="1.8" height="1.8" fill="#8585ac"/><rect x="48.6" y="178.06" width="2.2" height="2.2" fill="#86868e"/><rect x="45.5" y="174.86" width="6" height="6" fill="none" stroke="#1c1c14" stroke-width="1.2"/><path d="M38.4 187.465H45" stroke="#808080" stroke-width="0.6" stroke-dasharray="0.55 0.55"/><rect x="45" y="183.965" width="7" height="7" fill="#7f7d5a"/><rect x="46" y="186.865" width="2.2" height="3" fill="#a09a3a"/><rect x="48.4" y="184.865" width="2.4" height="2.4" fill="#99933c"/><rect x="46.2" y="184.865" width="1.8" height="1.8" fill="#8585ac"/><rect x="48.6" y="187.665" width="2.2" height="2.2" fill="#86868e"/><rect x="45.5" y="184.465" width="6" height="6" fill="none" stroke="#1c1c14" stroke-width="1.2"/><path d="M38.4 197.07H45" stroke="#808080" stroke-width="0.6" stroke-dasharray="0.55 0.55"/><rect x="45" y="193.57" width="7" height="7" fill="#7f7d5a"/><rect x="46" y="196.47" width="2.2" height="3" fill="#a09a3a"/><rect x="48.4" y="194.47" width="2.4" height="2.4" fill="#99933c"/><rect x="46.2" y="194.47" width="1.8" height="1.8" fill="#8585ac"/><rect x="48.6" y="197.26999999999998" width="2.2" height="2.2" fill="#86868e"/><rect x="45.5" y="194.07" width="6" height="6" fill="none" stroke="#1c1c14" stroke-width="1.2"/><path d="M38.4 206.675H45" stroke="#808080" stroke-width="0.6" stroke-dasharray="0.55 0.55"/><rect x="45" y="203.175" width="7" height="7" fill="#7f7d5a"/><rect x="46" y="206.07500000000002" width="2.2" height="3" fill="#a09a3a"/><rect x="48.4" y="204.07500000000002" width="2.4" height="2.4" fill="#99933c"/><rect x="46.2" y="204.07500000000002" width="1.8" height="1.8" fill="#8585ac"/><rect x="48.6" y="206.875" width="2.2" height="2.2" fill="#86868e"/><rect x="45.5" y="203.675" width="6" height="6" fill="none" stroke="#1c1c14" stroke-width="1.2"/><path d="M38.4 216.28H45" stroke="#808080" stroke-width="0.6" stroke-dasharray="0.55 0.55"/><rect x="45" y="212.78" width="7" height="7" fill="#7f7d5a"/><rect x="46" y="215.68" width="2.2" height="3" fill="#a09a3a"/><rect x="48.4" y="213.68" width="2.4" height="2.4" fill="#99933c"/><rect x="46.2" y="213.68" width="1.8" height="1.8" fill="#8585ac"/><rect x="48.6" y="216.48" width="2.2" height="2.2" fill="#86868e"/><rect x="45.5" y="213.28" width="6" height="6" fill="none" stroke="#1c1c14" stroke-width="1.2"/><path d="M38.4 225.885H45" stroke="#808080" stroke-width="0.6" stroke-dasharray="0.55 0.55"/><rect x="45" y="222.385" width="7" height="7" fill="#7f7d5a"/><rect x="46" y="225.285" width="2.2" height="3" fill="#a09a3a"/><rect x="48.4" y="223.285" width="2.4" height="2.4" fill="#99933c"/><rect x="46.2" y="223.285" width="1.8" height="1.8" fill="#8585ac"/><rect x="48.6" y="226.08499999999998" width="2.2" height="2.2" fill="#86868e"/><rect x="45.5" y="222.885" width="6" height="6" fill="none" stroke="#1c1c14" stroke-width="1.2"/><path d="M38.4 235.49H45" stroke="#808080" stroke-width="0.6" stroke-dasharray="0.55 0.55"/><rect x="45" y="231.99" width="7" height="7" fill="#7f7d5a"/><rect x="46" y="234.89000000000001" width="2.2" height="3" fill="#a09a3a"/><rect x="48.4" y="232.89000000000001" width="2.4" height="2.4" fill="#99933c"/><rect x="46.2" y="232.89000000000001" width="1.8" height="1.8" fill="#8585ac"/><rect x="48.6" y="235.69" width="2.2" height="2.2" fill="#86868e"/><rect x="45.5" y="232.49" width="6" height="6" fill="none" stroke="#1c1c14" stroke-width="1.2"/><path d="M38.4 245.095H45" stroke="#808080" stroke-width="0.6" stroke-dasharray="0.55 0.55"/><rect x="45" y="241.595" width="7" height="7" fill="#7f7d5a"/><rect x="46" y="244.495" width="2.2" height="3" fill="#a09a3a"/><rect x="48.4" y="242.495" width="2.4" height="2.4" fill="#99933c"/><rect x="46.2" y="242.495" width="1.8" height="1.8" fill="#8585ac"/><rect x="48.6" y="245.295" width="2.2" height="2.2" fill="#86868e"/><rect x="45.5" y="242.095" width="6" height="6" fill="none" stroke="#1c1c14" stroke-width="1.2"/><path d="M38.4 254.70000000000002H45" stroke="#808080" stroke-width="0.6" stroke-dasharray="0.55 0.55"/><rect x="45" y="251.20000000000002" width="7" height="7" fill="#7f7d5a"/><rect x="46" y="254.10000000000002" width="2.2" height="3" fill="#a09a3a"/><rect x="48.4" y="252.10000000000002" width="2.4" height="2.4" fill="#99933c"/><rect x="46.2" y="252.10000000000002" width="1.8" height="1.8" fill="#8585ac"/><rect x="48.6" y="254.9" width="2.2" height="2.2" fill="#86868e"/><rect x="45.5" y="251.70000000000002" width="6" height="6" fill="none" stroke="#1c1c14" stroke-width="1.2"/><path d="M38.4 264.305H45" stroke="#808080" stroke-width="0.6" stroke-dasharray="0.55 0.55"/><rect x="45" y="260.805" width="7" height="7" fill="#7f7d5a"/><rect x="46" y="263.705" width="2.2" height="3" fill="#a09a3a"/><rect x="48.4" y="261.705" width="2.4" height="2.4" fill="#99933c"/><rect x="46.2" y="261.705" width="1.8" height="1.8" fill="#8585ac"/><rect x="48.6" y="264.505" width="2.2" height="2.2" fill="#86868e"/><rect x="45.5" y="261.305" width="6" height="6" fill="none" stroke="#1c1c14" stroke-width="1.2"/><path d="M38.4 273.91H45" stroke="#808080" stroke-width="0.6" stroke-dasharray="0.55 0.55"/><rect x="45" y="270.41" width="7" height="7" fill="#7f7d5a"/><rect x="46" y="273.31" width="2.2" height="3" fill="#a09a3a"/><rect x="48.4" y="271.31" width="2.4" height="2.4" fill="#99933c"/><rect x="46.2" y="271.31" width="1.8" height="1.8" fill="#8585ac"/><rect x="48.6" y="274.11" width="2.2" height="2.2" fill="#86868e"/><rect x="45.5" y="270.91" width="6" height="6" fill="none" stroke="#1c1c14" stroke-width="1.2"/><path d="M38.4 283.51500000000004H45" stroke="#808080" stroke-width="0.6" stroke-dasharray="0.55 0.55"/><rect x="45" y="280.01500000000004" width="7" height="7" fill="#7f7d5a"/><rect x="46" y="282.915" width="2.2" height="3" fill="#a09a3a"/><rect x="48.4" y="280.915" width="2.4" height="2.4" fill="#99933c"/><rect x="46.2" y="280.915" width="1.8" height="1.8" fill="#8585ac"/><rect x="48.6" y="283.71500000000003" width="2.2" height="2.2" fill="#86868e"/><rect x="45.5" y="280.51500000000004" width="6" height="6" fill="none" stroke="#1c1c14" stroke-width="1.2"/><path d="M38.4 293.12H45" stroke="#808080" stroke-width="0.6" stroke-dasharray="0.55 0.55"/><rect x="45" y="289.62" width="7" height="7" fill="#7f7d5a"/><rect x="46" y="292.52" width="2.2" height="3" fill="#a09a3a"/><rect x="48.4" y="290.52" width="2.4" height="2.4" fill="#99933c"/><rect x="46.2" y="290.52" width="1.8" height="1.8" fill="#8585ac"/><rect x="48.6" y="293.32" width="2.2" height="2.2" fill="#86868e"/><rect x="45.5" y="290.12" width="6" height="6" fill="none" stroke="#1c1c14" stroke-width="1.2"/><path d="M38.4 302.725H45" stroke="#808080" stroke-width="0.6" stroke-dasharray="0.55 0.55"/><rect x="45" y="299.225" width="7" height="7" fill="#7f7d5a"/><rect x="46" y="302.125" width="2.2" height="3" fill="#a09a3a"/><rect x="48.4" y="300.125" width="2.4" height="2.4" fill="#99933c"/><rect x="46.2" y="300.125" width="1.8" height="1.8" fill="#8585ac"/><rect x="48.6" y="302.925" width="2.2" height="2.2" fill="#86868e"/><rect x="45.5" y="299.725" width="6" height="6" fill="none" stroke="#1c1c14" stroke-width="1.2"/><path d="M38.4 312.33000000000004H45" stroke="#808080" stroke-width="0.6" stroke-dasharray="0.55 0.55"/><rect x="45" y="308.83000000000004" width="7" height="7" fill="#7f7d5a"/><rect x="46" y="311.73" width="2.2" height="3" fill="#a09a3a"/><rect x="48.4" y="309.73" width="2.4" height="2.4" fill="#99933c"/><rect x="46.2" y="309.73" width="1.8" height="1.8" fill="#8585ac"/><rect x="48.6" y="312.53000000000003" width="2.2" height="2.2" fill="#86868e"/><rect x="45.5" y="309.33000000000004" width="6" height="6" fill="none" stroke="#1c1c14" stroke-width="1.2"/><path d="M38.4 321.93500000000006H45" stroke="#808080" stroke-width="0.6" stroke-dasharray="0.55 0.55"/><rect x="45" y="318.43500000000006" width="7" height="7" fill="#7f7d5a"/><rect x="46" y="321.33500000000004" width="2.2" height="3" fill="#a09a3a"/><rect x="48.4" y="319.33500000000004" width="2.4" height="2.4" fill="#99933c"/><rect x="46.2" y="319.33500000000004" width="1.8" height="1.8" fill="#8585ac"/><rect x="48.6" y="322.13500000000005" width="2.2" height="2.2" fill="#86868e"/><rect x="45.5" y="318.93500000000006" width="6" height="6" fill="none" stroke="#1c1c14" stroke-width="1.2"/><path d="M38.4 331.54H45" stroke="#808080" stroke-width="0.6" stroke-dasharray="0.55 0.55"/><rect x="45" y="328.04" width="7" height="7" fill="#7f7d5a"/><rect x="46" y="330.94" width="2.2" height="3" fill="#a09a3a"/><rect x="48.4" y="328.94" width="2.4" height="2.4" fill="#99933c"/><rect x="46.2" y="328.94" width="1.8" height="1.8" fill="#8585ac"/><rect x="48.6" y="331.74" width="2.2" height="2.2" fill="#86868e"/><rect x="45.5" y="328.54" width="6" height="6" fill="none" stroke="#1c1c14" stroke-width="1.2"/><path d="M38.4 341.14500000000004H45" stroke="#808080" stroke-width="0.6" stroke-dasharray="0.55 0.55"/><rect x="45" y="337.64500000000004" width="7" height="7" fill="#7f7d5a"/><rect x="46" y="340.545" width="2.2" height="3" fill="#a09a3a"/><rect x="48.4" y="338.545" width="2.4" height="2.4" fill="#99933c"/><rect x="46.2" y="338.545" width="1.8" height="1.8" fill="#8585ac"/><rect x="48.6" y="341.345" width="2.2" height="2.2" fill="#86868e"/><rect x="45.5" y="338.14500000000004" width="6" height="6" fill="none" stroke="#1c1c14" stroke-width="1.2"/><path d="M38.4 350.75000000000006H45" stroke="#808080" stroke-width="0.6" stroke-dasharray="0.55 0.55"/><rect x="45" y="347.25000000000006" width="7" height="7" fill="#7f7d5a"/><rect x="46" y="350.15000000000003" width="2.2" height="3" fill="#a09a3a"/><rect x="48.4" y="348.15000000000003" width="2.4" height="2.4" fill="#99933c"/><rect x="46.2" y="348.15000000000003" width="1.8" height="1.8" fill="#8585ac"/><rect x="48.6" y="350.95000000000005" width="2.2" height="2.2" fill="#86868e"/><rect x="45.5" y="347.75000000000006" width="6" height="6" fill="none" stroke="#1c1c14" stroke-width="1.2"/><path d="M38.4 360.355H45" stroke="#808080" stroke-width="0.6" stroke-dasharray="0.55 0.55"/><rect x="45" y="356.855" width="7" height="7" fill="#7f7d5a"/><rect x="46" y="359.755" width="2.2" height="3" fill="#a09a3a"/><rect x="48.4" y="357.755" width="2.4" height="2.4" fill="#99933c"/><rect x="46.2" y="357.755" width="1.8" height="1.8" fill="#8585ac"/><rect x="48.6" y="360.555" width="2.2" height="2.2" fill="#86868e"/><rect x="45.5" y="357.355" width="6" height="6" fill="none" stroke="#1c1c14" stroke-width="1.2"/><path d="M38.4 369.96000000000004H45" stroke="#808080" stroke-width="0.6" stroke-dasharray="0.55 0.55"/><rect x="45" y="366.46000000000004" width="7" height="7" fill="#7f7d5a"/><rect x="46" y="369.36" width="2.2" height="3" fill="#a09a3a"/><rect x="48.4" y="367.36" width="2.4" height="2.4" fill="#99933c"/><rect x="46.2" y="367.36" width="1.8" height="1.8" fill="#8585ac"/><rect x="48.6" y="370.16" width="2.2" height="2.2" fill="#86868e"/><rect x="45.5" y="366.96000000000004" width="6" height="6" fill="none" stroke="#1c1c14" stroke-width="1.2"/><path d="M38.4 379.56500000000005H45" stroke="#808080" stroke-width="0.6" stroke-dasharray="0.55 0.55"/><rect x="45" y="376.06500000000005" width="7" height="7" fill="#7f7d5a"/><rect x="46" y="378.96500000000003" width="2.2" height="3" fill="#a09a3a"/><rect x="48.4" y="376.96500000000003" width="2.4" height="2.4" fill="#99933c"/><rect x="46.2" y="376.96500000000003" width="1.8" height="1.8" fill="#8585ac"/><rect x="48.6" y="379.76500000000004" width="2.2" height="2.2" fill="#86868e"/><rect x="45.5" y="376.56500000000005" width="6" height="6" fill="none" stroke="#1c1c14" stroke-width="1.2"/><path d="M38.4 389.17H45" stroke="#808080" stroke-width="0.6" stroke-dasharray="0.55 0.55"/><rect x="45" y="385.67" width="7" height="7" fill="#7f7d5a"/><rect x="46" y="388.57" width="2.2" height="3" fill="#a09a3a"/><rect x="48.4" y="386.57" width="2.4" height="2.4" fill="#99933c"/><rect x="46.2" y="386.57" width="1.8" height="1.8" fill="#8585ac"/><rect x="48.6" y="389.37" width="2.2" height="2.2" fill="#86868e"/><rect x="45.5" y="386.17" width="6" height="6" fill="none" stroke="#1c1c14" stroke-width="1.2"/><path d="M38.4 398.77500000000003H45" stroke="#808080" stroke-width="0.6" stroke-dasharray="0.55 0.55"/><rect x="45" y="395.27500000000003" width="7" height="7" fill="#7f7d5a"/><rect x="46" y="398.175" width="2.2" height="3" fill="#a09a3a"/><rect x="48.4" y="396.175" width="2.4" height="2.4" fill="#99933c"/><rect x="46.2" y="396.175" width="1.8" height="1.8" fill="#8585ac"/><rect x="48.6" y="398.975" width="2.2" height="2.2" fill="#86868e"/><rect x="45.5" y="395.77500000000003" width="6" height="6" fill="none" stroke="#1c1c14" stroke-width="1.2"/><path d="M38.4 408.38000000000005H45" stroke="#808080" stroke-width="0.6" stroke-dasharray="0.55 0.55"/><rect x="45" y="404.88000000000005" width="7" height="7" fill="#7f7d5a"/><rect x="46" y="407.78000000000003" width="2.2" height="3" fill="#a09a3a"/><rect x="48.4" y="405.78000000000003" width="2.4" height="2.4" fill="#99933c"/><rect x="46.2" y="405.78000000000003" width="1.8" height="1.8" fill="#8585ac"/><rect x="48.6" y="408.58000000000004" width="2.2" height="2.2" fill="#86868e"/><rect x="45.5" y="405.38000000000005" width="6" height="6" fill="none" stroke="#1c1c14" stroke-width="1.2"/><path d="M38.4 417.985H45" stroke="#808080" stroke-width="0.6" stroke-dasharray="0.55 0.55"/><rect x="45" y="414.485" width="7" height="7" fill="#7f7d5a"/><rect x="46" y="417.385" width="2.2" height="3" fill="#a09a3a"/><rect x="48.4" y="415.385" width="2.4" height="2.4" fill="#99933c"/><rect x="46.2" y="415.385" width="1.8" height="1.8" fill="#8585ac"/><rect x="48.6" y="418.185" width="2.2" height="2.2" fill="#86868e"/><rect x="45.5" y="414.985" width="6" height="6" fill="none" stroke="#1c1c14" stroke-width="1.2"/><path d="M38.4 427.59000000000003H45" stroke="#808080" stroke-width="0.6" stroke-dasharray="0.55 0.55"/><rect x="45" y="424.09000000000003" width="7" height="7" fill="#7f7d5a"/><rect x="46" y="426.99" width="2.2" height="3" fill="#a09a3a"/><rect x="48.4" y="424.99" width="2.4" height="2.4" fill="#99933c"/><rect x="46.2" y="424.99" width="1.8" height="1.8" fill="#8585ac"/><rect x="48.6" y="427.79" width="2.2" height="2.2" fill="#86868e"/><rect x="45.5" y="424.59000000000003" width="6" height="6" fill="none" stroke="#1c1c14" stroke-width="1.2"/><path d="M38.4 437.19500000000005H45" stroke="#808080" stroke-width="0.6" stroke-dasharray="0.55 0.55"/><rect x="45.3" y="433.7950000000001" width="6.6" height="6.7" fill="#fff" stroke="#1c1c1c" stroke-width="1.2"/><path d="M47.5 439.2950000000001v-4.1h2.7M47.5 437.095h2.1" stroke="#222" stroke-width="1" fill="none"/></svg>
<div id="edtabbar" class="a"></div>
<div class="a" style="left:262.5px;top:46.4px;width:59.8px;height:10.6px;background:#f4f4f4;border-top:0.7px solid #b4b4b4;border-right:0.7px solid #c4c4c4;box-sizing:border-box;"></div>
<div class="t" style="left:275px;top:49.3px;font-size:6.0px;color:#111;letter-spacing:-0.13px;">[1] rhown_B1</div>
<div class="a" style="left:322.3px;top:46.4px;width:63.2px;height:10.6px;background:#f4f4f4;border-top:0.7px solid #b4b4b4;border-right:0.7px solid #c4c4c4;box-sizing:border-box;"></div>
<div class="t" style="left:334.8px;top:49.3px;font-size:6.0px;color:#111;letter-spacing:-0.079px;">[1] c2rcc_flags</div>
<div class="a" style="left:385.5px;top:46.4px;width:57.8px;height:10.6px;background:#f4f4f4;border-top:0.7px solid #b4b4b4;border-right:0.7px solid #c4c4c4;box-sizing:border-box;"></div>
<div class="t" style="left:390.5px;top:49.3px;font-size:6.0px;color:#111;letter-spacing:-0.079px;">[1] c2rcc_flags</div>
<div class="a" style="left:443.3px;top:46.4px;width:60.6px;height:10.8px;background:#e3eefb;border:0.7px solid #86a9d6;border-bottom:none;box-sizing:border-box;"></div>
<div class="t" style="left:456px;top:49.3px;font-size:6.0px;color:#111;letter-spacing:-0.063px;">[1] rhown_B3</div>
<svg style="left:0;top:0" width="1024" height="60" viewBox="0 0 1024 60"><rect x="264.7" y="48.0" width="7" height="7" fill="#7f7d5a"/><rect x="265.7" y="50.9" width="2.2" height="3" fill="#a09a3a"/><rect x="268.09999999999997" y="48.9" width="2.4" height="2.4" fill="#99933c"/><rect x="265.9" y="48.9" width="1.8" height="1.8" fill="#8585ac"/><rect x="268.3" y="51.7" width="2.2" height="2.2" fill="#86868e"/><rect x="265.2" y="48.5" width="6" height="6" fill="none" stroke="#1c1c14" stroke-width="1.2"/><path d="M316.29999999999995 50.3l3.2 3.4M319.5 50.3l-3.2 3.4" stroke="#222" stroke-width="0.75"/><rect x="324.5" y="48.0" width="7" height="7" fill="#7f7d5a"/><rect x="325.5" y="50.9" width="2.2" height="3" fill="#a09a3a"/><rect x="327.9" y="48.9" width="2.4" height="2.4" fill="#99933c"/><rect x="325.7" y="48.9" width="1.8" height="1.8" fill="#8585ac"/><rect x="328.1" y="51.7" width="2.2" height="2.2" fill="#86868e"/><rect x="325.0" y="48.5" width="6" height="6" fill="none" stroke="#1c1c14" stroke-width="1.2"/><path d="M379.4 50.3l3.2 3.4M382.6 50.3l-3.2 3.4" stroke="#222" stroke-width="0.75"/><path d="M437.4 50.3l3.2 3.4M440.6 50.3l-3.2 3.4" stroke="#222" stroke-width="0.75"/><rect x="445.8" y="48.0" width="7" height="7" fill="#7f7d5a"/><rect x="446.8" y="50.9" width="2.2" height="3" fill="#a09a3a"/><rect x="449.2" y="48.9" width="2.4" height="2.4" fill="#99933c"/><rect x="447.0" y="48.9" width="1.8" height="1.8" fill="#8585ac"/><rect x="449.40000000000003" y="51.7" width="2.2" height="2.2" fill="#86868e"/><rect x="446.3" y="48.5" width="6" height="6" fill="none" stroke="#1c1c14" stroke-width="1.2"/><path d="M497.4 50.3l3.2 3.4M500.6 50.3l-3.2 3.4" stroke="#222" stroke-width="0.75"/><path d="M990.2 48.1l-1.6 1.9 1.6 1.9M997.6 48.1l1.6 1.9-1.6 1.9" fill="none" stroke="#c6c6c6" stroke-width="0.7"/><path d="M1006 48.6h5l-2.5 2.7z" fill="#222"/><rect x="1015.5" y="48.2" width="4.9" height="3.8" fill="#fff" stroke="#222" stroke-width="0.75"/><path d="M1015.5 48.6h4.9" stroke="#222" stroke-width="1.1"/></svg>
<div class="a" style="left:503.9px;top:56.2px;width:518.3px;height:0.8px;background:#fafafa;"></div>
<div class="a" style="left:260.9px;top:57px;width:1.8px;height:334px;background:#fafafa;"></div>
<div class="a" style="left:262.4px;top:390.9px;width:761.6px;height:2.1px;background:#fbfbfb;"></div>
<div class="a" style="left:1022.2px;top:46px;width:1.8px;height:345px;background:#f8f8f8;"></div>
<div class="a" style="left:262.6px;top:56.9px;width:759.6px;height:334px;background:#b59a38;"></div>
<div class="a" style="left:262.6px;top:56.9px;width:757.2px;height:331.7px;background:#d3ad40;"></div>
<div class="a" style="left:265.7px;top:59.7px;width:753.8px;height:328.7px;background:#333333;box-shadow:0 0 1px 0.5px #6e5e26;"></div>
<svg style="left:0;top:0" width="330" height="130" viewBox="0 0 330 130"><defs><clipPath id="cc"><rect x="265.8" y="59.9" width="70" height="70"/></clipPath></defs><g clip-path="url(#cc)"><path d="M291.25 63.05L291.25 59.25" stroke="#9a8430" stroke-width="2.2"/><path d="M295.02 63.38L295.68 59.64" stroke="#606060" stroke-width="2.2"/><path d="M298.67 64.36L299.97 60.79" stroke="#606060" stroke-width="2.2"/><path d="M302.10 65.96L304.00 62.67" stroke="#606060" stroke-width="2.2"/><path d="M305.20 68.13L307.64 65.22" stroke="#606060" stroke-width="2.2"/><path d="M307.87 70.80L310.78 68.36" stroke="#606060" stroke-width="2.2"/><path d="M310.04 73.90L313.33 72.00" stroke="#606060" stroke-width="2.2"/><path d="M311.64 77.33L315.21 76.03" stroke="#606060" stroke-width="2.2"/><path d="M312.62 80.98L316.36 80.32" stroke="#606060" stroke-width="2.2"/><path d="M312.95 84.75L316.75 84.75" stroke="#606060" stroke-width="2.2"/><path d="M312.62 88.52L316.36 89.18" stroke="#606060" stroke-width="2.2"/><path d="M311.64 92.17L315.21 93.47" stroke="#606060" stroke-width="2.2"/><path d="M310.04 95.60L313.33 97.50" stroke="#606060" stroke-width="2.2"/><path d="M307.87 98.70L310.78 101.14" stroke="#606060" stroke-width="2.2"/><path d="M305.20 101.37L307.64 104.28" stroke="#606060" stroke-width="2.2"/><path d="M302.10 103.54L304.00 106.83" stroke="#606060" stroke-width="2.2"/><path d="M298.67 105.14L299.97 108.71" stroke="#606060" stroke-width="2.2"/><path d="M295.02 106.12L295.68 109.86" stroke="#606060" stroke-width="2.2"/><path d="M291.25 106.45L291.25 110.25" stroke="#606060" stroke-width="2.2"/><path d="M287.48 106.12L286.82 109.86" stroke="#606060" stroke-width="2.2"/><path d="M283.83 105.14L282.53 108.71" stroke="#606060" stroke-width="2.2"/><path d="M280.40 103.54L278.50 106.83" stroke="#606060" stroke-width="2.2"/><path d="M277.30 101.37L274.86 104.28" stroke="#606060" stroke-width="2.2"/><path d="M274.63 98.70L271.72 101.14" stroke="#606060" stroke-width="2.2"/><path d="M272.46 95.60L269.17 97.50" stroke="#606060" stroke-width="2.2"/><path d="M270.86 92.17L267.29 93.47" stroke="#606060" stroke-width="2.2"/><path d="M269.88 88.52L266.14 89.18" stroke="#606060" stroke-width="2.2"/><path d="M269.55 84.75L265.75 84.75" stroke="#606060" stroke-width="2.2"/><path d="M269.88 80.98L266.14 80.32" stroke="#606060" stroke-width="2.2"/><path d="M270.86 77.33L267.29 76.03" stroke="#606060" stroke-width="2.2"/><path d="M272.46 73.90L269.17 72.00" stroke="#606060" stroke-width="2.2"/><path d="M274.63 70.80L271.72 68.36" stroke="#606060" stroke-width="2.2"/><path d="M277.30 68.13L274.86 65.22" stroke="#606060" stroke-width="2.2"/><path d="M280.40 65.96L278.50 62.67" stroke="#606060" stroke-width="2.2"/><path d="M283.83 64.36L282.53 60.79" stroke="#606060" stroke-width="2.2"/><path d="M287.48 63.38L286.82 59.64" stroke="#606060" stroke-width="2.2"/><path transform="rotate(0 291.25 84.75)" d="M291.25 65.55l6.9 6.2h-3.2l0.6 3.3h-8.6l0.6-3.3h-3.2z" fill="#646464"/><path transform="rotate(90 291.25 84.75)" d="M291.25 65.55l6.9 6.2h-3.2l0.6 3.3h-8.6l0.6-3.3h-3.2z" fill="#646464"/><path transform="rotate(180 291.25 84.75)" d="M291.25 65.55l6.9 6.2h-3.2l0.6 3.3h-8.6l0.6-3.3h-3.2z" fill="#646464"/><path transform="rotate(270 291.25 84.75)" d="M291.25 65.55l6.9 6.2h-3.2l0.6 3.3h-8.6l0.6-3.3h-3.2z" fill="#646464"/><circle cx="291.25" cy="84.75" r="3.1" fill="#666"/><path d="M266.2 118h50.8" stroke="#6e6e6e" stroke-width="0.9"/><path d="M291.2 113.8v8.2" stroke="#7a7a7a" stroke-width="1.2"/></g></svg>
<svg style="left:0;top:0" width="1024" height="400" viewBox="0 0 1024 400"><defs><filter id="rough" x="-5%" y="-5%" width="110%" height="110%"><feTurbulence type="fractalNoise" baseFrequency="0.35" numOctaves="2" seed="4" result="n"/><feDisplacementMap in="SourceGraphic" in2="n" scale="4.5" xChannelSelector="R" yChannelSelector="G"/></filter><filter id="rough2" x="-5%" y="-5%" width="110%" height="110%"><feTurbulence type="fractalNoise" baseFrequency="0.6" numOctaves="2" seed="9" result="n"/><feDisplacementMap in="SourceGraphic" in2="n" scale="2.2" xChannelSelector="R" yChannelSelector="G"/></filter><clipPath id="ic"><rect x="475.0" y="59.7" width="334.70000000000005" height="328.7"/></clipPath></defs><rect x="475.0" y="59.7" width="334.70000000000005" height="328.7" fill="#000"/><g clip-path="url(#ic)"><g filter="url(#rough2)"><path d="M657.5 59.7 L659.0 61.5 L663.0 62.2 L663.5 64.0 L663.5 73.0 L665.0 76.0 L668.0 76.2 L671.0 74.2 L675.0 75.0 L679.4 76.8 L680.5 79.5 L680.0 82.0 L677.5 84.2 L676.0 87.0 L677.0 89.5 L681.0 89.0" fill="none" stroke="#fff" stroke-width="1.05" stroke-linecap="round" stroke-linejoin="round" /><path d="M681.0 89.0 L684.0 91.0 L688.0 95.0 L691.0 98.0" fill="none" stroke="#fff" stroke-width="1.7" stroke-linecap="round" stroke-linejoin="round" /><path d="M619.4 59.7 L620.4 62.2 L623.0 63.4 L626.0 63.0 L628.2 60.5 L628.4 59.7" fill="none" stroke="#fff" stroke-width="0.55" stroke-linecap="round" stroke-linejoin="round" opacity="0.75" /><path d="M689.0 94.5 L692.5 91.0 L694.5 92.5 L696.0 96.0 L700.0 97.0 L702.0 99.5 L701.0 102.5 L699.5 104.5 L697.0 103.8 L695.0 101.0 L692.0 100.5 L690.5 98.5Z" fill="#fff"/><path d="M693.5 92.0 L693.0 89.0 L690.5 84.5 L688.6 80.0" fill="none" stroke="#fff" stroke-width="0.9" stroke-linecap="round" stroke-linejoin="round" /><path d="M693.5 89.5 L695.3 85.0 L696.4 79.8" fill="none" stroke="#fff" stroke-width="0.7" stroke-linecap="round" stroke-linejoin="round" opacity="0.85" /><path d="M693.8 90.5 L697.0 89.4 L700.5 88.0 L703.0 84.2 L706.0 80.6 L705.6 77.2" fill="none" stroke="#fff" stroke-width="1.3" stroke-linecap="round" stroke-linejoin="round" /><path d="M697.0 103.4 L692.0 104.2 L687.0 105.6" fill="none" stroke="#fff" stroke-width="1.0" stroke-linecap="round" stroke-linejoin="round" /><path d="M699.0 103.6 L696.5 105.0 L693.8 105.8" fill="none" stroke="#fff" stroke-width="1.0" stroke-linecap="round" stroke-linejoin="round" /><path d="M700.5 101.5 L705.0 105.2 L710.0 108.0 L713.0 110.0" fill="none" stroke="#fff" stroke-width="1.8" stroke-linecap="round" stroke-linejoin="round" /><path d="M711.0 108.0 L714.5 106.0 L717.0 107.5 L719.0 106.0 L721.0 108.0 L722.5 110.5 L723.0 113.5 L719.0 114.5 L716.0 112.5 L713.0 112.5Z" fill="#fff"/><path d="M716.0 108.0 L717.0 104.0 L719.0 101.5 L721.0 99.0" fill="none" stroke="#fff" stroke-width="0.9" stroke-linecap="round" stroke-linejoin="round" /><path d="M721.0 113.0 L724.0 114.5 L727.0 116.8 L731.0 116.0 L735.0 112.2 L738.0 110.0" fill="none" stroke="#fff" stroke-width="1.9" stroke-linecap="round" stroke-linejoin="round" /><path d="M720.0 119.0 L723.5 116.5" fill="none" stroke="#fff" stroke-width="1.0" stroke-linecap="round" stroke-linejoin="round" /><path d="M724.5 117.0 L720.0 119.8 L715.0 122.0 L712.0 123.0 L707.0 122.0 L703.0 121.2 L700.0 123.0" fill="none" stroke="#fff" stroke-width="1.4" stroke-linecap="round" stroke-linejoin="round" /><path d="M712.0 123.0 L709.0 124.6" fill="none" stroke="#fff" stroke-width="0.9" stroke-linecap="round" stroke-linejoin="round" /></g><g filter="url(#rough2)"><path d="M792.5 59.7 L792.0 62.0 L790.0 65.0 L788.0 69.5 L787.5 74.5 L788.0 78.5 L790.4 81.6 L792.4 85.2 L793.0 89.6 L794.2 93.4" fill="none" stroke="#fff" stroke-width="1.6" stroke-linecap="round" stroke-linejoin="round" /><path d="M784.4 61.6 L787.6 66.0" fill="none" stroke="#fff" stroke-width="0.8" stroke-linecap="round" stroke-linejoin="round" opacity="0.9" /><path d="M808.6 81.8 L804.0 86.0 L800.0 90.0 L796.0 93.0" fill="none" stroke="#fff" stroke-width="2.5" stroke-linecap="round" stroke-linejoin="round" /><path d="M800.5 85.2 L798.0 88.5 L796.0 91.5" fill="none" stroke="#fff" stroke-width="1.0" stroke-linecap="round" stroke-linejoin="round" /><path d="M776.2 88.8 L779.0 92.0 L782.0 95.0 L783.0 98.0 L784.2 101.0" fill="none" stroke="#fff" stroke-width="1.3" stroke-linecap="round" stroke-linejoin="round" /><path d="M766.4 101.6 L769.0 105.0 L771.4 108.0 L773.0 111.0 L776.0 113.0" fill="none" stroke="#fff" stroke-width="1.6" stroke-linecap="round" stroke-linejoin="round" /><path d="M769.5 104.5 L774.0 104.5 L777.0 107.5" fill="none" stroke="#fff" stroke-width="1.8" stroke-linecap="round" stroke-linejoin="round" /></g><g filter="url(#rough)"><path d="M796.0 93.0 L792.5 95.8 L789.5 97.8 L786.0 101.0" fill="none" stroke="#fff" stroke-width="3.8" stroke-linecap="round" stroke-linejoin="round" /><path d="M786.0 101.0 L783.0 104.5 L779.0 109.0" fill="none" stroke="#fff" stroke-width="5" stroke-linecap="round" stroke-linejoin="round" /><path d="M779.0 109.0 L773.0 113.5 L768.0 117.0" fill="none" stroke="#fff" stroke-width="6.5" stroke-linecap="round" stroke-linejoin="round" /><path d="M768.0 117.0 L762.0 121.0 L757.0 125.0" fill="none" stroke="#fff" stroke-width="9" stroke-linecap="round" stroke-linejoin="round" /><path d="M757.0 125.0 L752.0 129.0 L747.0 133.0" fill="none" stroke="#fff" stroke-width="10" stroke-linecap="round" stroke-linejoin="round" /><path d="M734.5 114.0 L737.5 108.5 L743.0 108.0 L747.0 114.0 L752.0 118.5 L758.0 117.0 L752.0 126.0 L745.0 127.0 L740.0 123.0 L737.0 119.0Z" fill="#fff"/><path d="M752.0 128.0 L756.0 137.0 L750.0 143.0 L744.0 149.0 L737.0 152.5 L730.0 153.0 L724.0 151.0 L721.0 147.0 L724.0 142.5 L729.0 139.0 L734.0 134.0 L739.0 127.0 L745.0 124.0Z" fill="#fff" opacity="0.84"/><path d="M809.7 143.0 L807.0 143.6 L805.0 146.0 L800.0 147.0 L796.5 144.0 L799.0 141.0 L803.0 137.0 L804.5 131.0 L802.0 126.0 L797.5 124.5 L794.5 128.5 L795.0 134.0 L792.0 137.0 L788.6 138.0 L783.0 140.0 L777.0 139.2 L770.0 138.6 L763.5 139.8 L757.5 142.5 L751.5 147.0 L746.0 150.5 L740.0 152.5 L733.0 155.0 L727.0 157.5 L720.0 158.5 L713.0 160.0 L706.0 159.0 L700.0 160.5 L694.0 163.0 L690.0 160.0 L697.0 156.0 L700.0 150.0 L703.0 144.2 L706.6 150.0 L712.0 150.0 L717.8 146.8 L722.0 143.0 L727.0 140.5 L730.0 143.5 L725.0 148.5 L719.0 152.5 L713.0 156.0 L706.0 159.0 L700.0 160.5 L694.0 163.0 L690.0 160.0 L685.0 164.0 L682.0 168.0 L676.0 172.0 L670.0 171.2 L665.0 174.0 L660.0 173.0 L658.0 170.5 L659.0 172.6 L663.0 175.2 L668.0 175.4 L672.0 173.8 L676.0 174.4 L680.0 176.4 L680.5 180.5 L679.0 185.0 L676.0 189.0 L672.0 192.0 L668.0 193.5 L672.0 196.0 L677.0 194.0 L681.0 190.5 L684.0 186.0 L686.5 181.0 L688.0 176.0 L694.0 173.0 L700.0 171.0 L705.0 168.0 L712.0 168.0 L718.5 166.0 L727.0 163.0 L736.0 160.0 L743.0 156.5 L748.0 156.0 L752.4 153.0 L757.0 151.0 L763.0 149.8 L769.0 151.0 L773.0 153.0 L777.0 155.6 L782.0 156.0 L786.0 158.0 L791.0 157.8 L794.0 160.0 L797.5 163.8 L799.0 168.0 L802.0 168.0 L805.0 165.0 L809.7 164.0Z" fill="#fff"/><path d="M775.0 130.8 L782.0 127.6 L788.5 126.6 L787.0 129.5 L782.0 131.5 L777.0 133.0Z" fill="#fff"/></g><path d="M774.6 144.0 L779.0 148.6 L784.6 154.4" fill="none" stroke="#000" stroke-width="3.0" stroke-linecap="round" stroke-linejoin="round" /><path d="M750.9 124.5h0.7v0.7h-0.7zM761.9 127.7h0.6v0.6h-0.6zM780.4 109.3h0.6v0.6h-0.6zM760.1 127.3h0.7v0.7h-0.7zM763.3 119.1h0.7v0.7h-0.7zM747.5 135.3h1.0v1.0h-1.0zM772.8 113.2h0.9v0.9h-0.9zM766.4 115.7h0.5v0.5h-0.5zM744.1 133.2h0.7v0.7h-0.7zM758.8 126.8h0.6v0.6h-0.6zM761.2 123.7h0.8v0.8h-0.8zM763.3 120.7h0.9v0.9h-0.9zM759.1 125.7h0.5v0.5h-0.5zM756.2 130.0h0.9v0.9h-0.9zM767.3 116.9h0.7v0.7h-0.7zM767.4 116.2h0.7v0.7h-0.7zM777.0 114.1h0.6v0.6h-0.6zM760.0 129.7h0.6v0.6h-0.6zM779.4 111.8h0.7v0.7h-0.7zM748.8 133.4h0.9v0.9h-0.9zM776.5 115.2h0.7v0.7h-0.7zM759.2 120.3h0.7v0.7h-0.7zM767.1 115.8h0.9v0.9h-0.9zM774.3 111.8h0.6v0.6h-0.6zM768.2 117.6h0.6v0.6h-0.6zM777.6 111.8h0.9v0.9h-0.9zM752.4 123.9h0.7v0.7h-0.7zM779.3 108.9h0.8v0.8h-0.8zM756.2 128.0h0.8v0.8h-0.8zM768.7 120.7h0.7v0.7h-0.7zM759.3 129.6h0.7v0.7h-0.7zM751.3 124.2h0.8v0.8h-0.8zM745.7 133.6h0.8v0.8h-0.8zM746.6 132.3h0.5v0.5h-0.5zM780.5 112.1h0.5v0.5h-0.5zM778.7 110.1h0.9v0.9h-0.9zM776.7 107.2h0.9v0.9h-0.9zM744.9 131.5h1.0v1.0h-1.0zM751.5 126.9h0.9v0.9h-0.9zM758.1 118.5h0.7v0.7h-0.7zM756.1 120.2h0.5v0.5h-0.5zM747.4 129.5h0.9v0.9h-0.9zM762.3 127.9h0.9v0.9h-0.9zM763.8 121.1h0.9v0.9h-0.9zM749.2 125.9h0.7v0.7h-0.7zM750.7 129.5h1.0v1.0h-1.0zM753.6 130.0h0.7v0.7h-0.7zM775.6 110.9h1.0v1.0h-1.0zM762.1 126.4h0.7v0.7h-0.7zM765.6 122.4h0.9v0.9h-0.9zM750.8 130.4h0.8v0.8h-0.8zM756.4 125.7h0.8v0.8h-0.8zM760.1 122.5h0.6v0.6h-0.6zM758.0 124.5h0.6v0.6h-0.6zM752.6 128.6h0.6v0.6h-0.6zM757.2 132.3h0.9v0.9h-0.9zM753.6 129.0h0.8v0.8h-0.8zM777.1 115.0h0.9v0.9h-0.9zM762.7 118.0h0.9v0.9h-0.9zM748.4 128.0h0.8v0.8h-0.8zM748.2 136.3h0.8v0.8h-0.8zM745.7 137.7h0.6v0.6h-0.6zM755.3 130.5h0.8v0.8h-0.8zM761.1 116.6h0.6v0.6h-0.6zM780.1 107.4h0.8v0.8h-0.8zM751.4 132.1h0.7v0.7h-0.7zM764.3 125.3h0.6v0.6h-0.6zM751.5 132.6h0.5v0.5h-0.5zM771.6 116.2h0.9v0.9h-0.9zM762.3 126.4h0.9v0.9h-0.9zM764.1 121.7h0.6v0.6h-0.6zM760.4 125.2h1.0v1.0h-1.0zM781.0 110.6h0.9v0.9h-0.9zM746.2 135.2h0.8v0.8h-0.8zM774.0 117.7h0.9v0.9h-0.9zM764.7 120.4h0.8v0.8h-0.8zM754.0 121.8h0.9v0.9h-0.9zM756.9 118.6h0.8v0.8h-0.8zM767.4 113.6h0.5v0.5h-0.5zM749.6 132.6h0.6v0.6h-0.6zM760.6 119.9h0.9v0.9h-0.9zM747.6 127.2h0.7v0.7h-0.7zM773.5 115.4h0.9v0.9h-0.9zM752.2 133.7h0.8v0.8h-0.8zM754.0 126.6h1.0v1.0h-1.0zM779.1 109.9h0.7v0.7h-0.7zM755.4 129.1h1.0v1.0h-1.0zM748.0 131.2h0.9v0.9h-0.9zM772.7 119.2h0.7v0.7h-0.7zM747.1 130.2h0.5v0.5h-0.5zM750.9 134.7h0.8v0.8h-0.8zM773.7 117.3h0.7v0.7h-0.7zM784.0 109.6h0.8v0.8h-0.8zM769.9 114.2h0.5v0.5h-0.5zM747.0 127.9h0.8v0.8h-0.8zM765.9 120.3h0.9v0.9h-0.9zM778.0 109.8h0.5v0.5h-0.5zM781.1 108.9h0.7v0.7h-0.7zM750.2 134.2h0.8v0.8h-0.8zM767.7 121.2h0.6v0.6h-0.6zM777.5 113.0h0.8v0.8h-0.8zM759.5 128.0h0.8v0.8h-0.8zM764.6 120.2h1.0v1.0h-1.0zM744.4 130.6h0.6v0.6h-0.6zM755.9 131.2h0.9v0.9h-0.9zM761.3 123.9h0.8v0.8h-0.8zM753.1 121.7h0.9v0.9h-0.9zM751.2 133.4h0.5v0.5h-0.5zM759.9 117.5h0.5v0.5h-0.5zM759.8 127.3h0.8v0.8h-0.8z" fill="#000"/><path d="M747.8 130.4h0.8v0.8h-0.8zM742.9 145.2h1.0v1.0h-1.0zM742.2 143.5h0.8v0.8h-0.8zM751.3 139.9h0.7v0.7h-0.7zM738.8 136.0h0.9v0.9h-0.9zM731.7 147.6h0.5v0.5h-0.5zM730.8 139.5h0.8v0.8h-0.8zM728.1 142.3h0.7v0.7h-0.7zM733.5 145.7h0.7v0.7h-0.7zM740.5 150.2h0.6v0.6h-0.6zM747.8 141.8h0.6v0.6h-0.6zM731.1 152.0h1.0v1.0h-1.0zM735.4 151.4h0.9v0.9h-0.9zM749.6 132.5h0.6v0.6h-0.6zM734.4 151.9h0.7v0.7h-0.7zM726.9 146.7h0.7v0.7h-0.7zM755.4 136.3h0.6v0.6h-0.6zM726.9 143.6h0.6v0.6h-0.6zM748.1 135.9h1.1v1.1h-1.1zM737.7 131.0h0.7v0.7h-0.7zM729.7 149.8h1.0v1.0h-1.0zM751.4 128.1h0.5v0.5h-0.5zM728.4 149.3h1.0v1.0h-1.0zM753.4 133.8h0.9v0.9h-0.9zM749.0 142.6h1.0v1.0h-1.0zM739.5 143.0h0.9v0.9h-0.9zM730.4 150.8h1.1v1.1h-1.1zM744.4 125.8h0.6v0.6h-0.6zM743.2 140.5h0.9v0.9h-0.9zM725.1 147.5h1.0v1.0h-1.0zM751.7 140.0h1.0v1.0h-1.0zM728.1 143.5h0.7v0.7h-0.7zM737.5 139.3h0.5v0.5h-0.5zM738.1 149.1h0.9v0.9h-0.9zM747.9 139.2h0.5v0.5h-0.5zM734.3 146.8h0.7v0.7h-0.7zM725.0 142.0h1.0v1.0h-1.0zM738.9 136.6h1.0v1.0h-1.0zM748.2 125.9h1.0v1.0h-1.0zM750.3 136.3h1.0v1.0h-1.0zM726.9 149.4h0.6v0.6h-0.6zM732.9 139.7h1.0v1.0h-1.0zM731.9 139.8h0.8v0.8h-0.8zM746.0 138.0h0.5v0.5h-0.5zM729.6 148.6h0.7v0.7h-0.7zM742.9 143.6h0.9v0.9h-0.9zM732.0 150.5h0.8v0.8h-0.8zM752.9 132.9h1.0v1.0h-1.0zM748.5 141.8h0.8v0.8h-0.8zM725.9 146.4h0.7v0.7h-0.7zM744.2 127.9h0.5v0.5h-0.5zM726.0 147.5h0.6v0.6h-0.6zM752.6 134.8h0.8v0.8h-0.8zM733.3 142.0h0.6v0.6h-0.6zM735.1 151.1h0.6v0.6h-0.6zM743.9 133.5h0.7v0.7h-0.7zM741.4 138.4h0.8v0.8h-0.8zM743.8 143.6h0.9v0.9h-0.9zM742.6 148.1h0.7v0.7h-0.7zM753.5 135.8h0.9v0.9h-0.9zM732.4 142.2h1.1v1.1h-1.1zM752.5 135.6h0.7v0.7h-0.7zM749.6 132.2h0.7v0.7h-0.7zM739.9 144.1h0.9v0.9h-0.9zM733.8 151.6h0.9v0.9h-0.9zM748.2 128.3h0.6v0.6h-0.6zM731.5 151.5h0.6v0.6h-0.6zM748.7 143.7h0.8v0.8h-0.8zM739.4 128.6h0.6v0.6h-0.6zM746.6 143.0h1.1v1.1h-1.1zM740.6 144.1h0.9v0.9h-0.9zM740.3 138.6h0.6v0.6h-0.6zM750.6 138.0h0.5v0.5h-0.5zM726.9 149.4h0.7v0.7h-0.7zM734.7 143.8h1.0v1.0h-1.0zM726.5 148.6h1.0v1.0h-1.0zM729.1 140.1h0.8v0.8h-0.8zM746.1 129.4h1.0v1.0h-1.0zM734.3 148.6h1.0v1.0h-1.0zM741.6 127.1h0.9v0.9h-0.9zM752.9 132.8h0.9v0.9h-0.9zM729.9 148.9h0.9v0.9h-0.9zM731.8 150.0h0.9v0.9h-0.9zM732.9 148.2h1.0v1.0h-1.0zM744.0 144.3h0.9v0.9h-0.9zM746.0 138.4h0.8v0.8h-0.8zM741.9 131.2h0.6v0.6h-0.6zM723.5 146.7h1.0v1.0h-1.0zM745.4 127.4h1.1v1.1h-1.1zM749.9 138.8h0.5v0.5h-0.5zM750.5 142.1h0.9v0.9h-0.9zM749.6 132.6h0.7v0.7h-0.7zM735.4 152.3h1.0v1.0h-1.0zM751.2 132.7h0.9v0.9h-0.9zM753.6 132.0h1.0v1.0h-1.0zM735.2 142.2h1.0v1.0h-1.0zM732.2 142.0h0.7v0.7h-0.7zM747.5 126.5h1.1v1.1h-1.1zM728.4 151.1h0.9v0.9h-0.9zM752.2 138.5h0.6v0.6h-0.6zM732.9 137.2h1.1v1.1h-1.1zM750.5 127.3h1.1v1.1h-1.1zM731.4 140.5h0.9v0.9h-0.9zM750.6 129.2h0.9v0.9h-0.9zM722.0 146.2h0.6v0.6h-0.6zM733.7 152.7h0.6v0.6h-0.6zM728.5 151.7h1.1v1.1h-1.1zM745.7 143.4h1.0v1.0h-1.0zM740.1 139.7h0.7v0.7h-0.7zM729.3 140.6h0.6v0.6h-0.6zM742.9 134.0h0.7v0.7h-0.7zM753.8 138.4h0.5v0.5h-0.5zM731.7 144.9h0.7v0.7h-0.7zM737.2 134.3h0.8v0.8h-0.8zM731.3 140.2h1.0v1.0h-1.0zM739.4 129.3h0.9v0.9h-0.9zM742.0 141.4h0.9v0.9h-0.9zM749.0 128.0h0.5v0.5h-0.5zM736.2 133.1h0.9v0.9h-0.9zM744.7 139.8h1.1v1.1h-1.1zM732.7 139.6h0.8v0.8h-0.8zM733.8 149.0h0.6v0.6h-0.6zM745.9 141.3h0.5v0.5h-0.5zM748.5 141.5h0.8v0.8h-0.8zM737.6 149.1h0.6v0.6h-0.6zM737.5 132.2h0.9v0.9h-0.9zM752.9 132.2h1.0v1.0h-1.0zM728.1 150.6h1.1v1.1h-1.1zM739.1 136.3h0.6v0.6h-0.6zM743.4 143.4h0.9v0.9h-0.9zM738.9 139.9h0.9v0.9h-0.9zM747.7 133.4h0.7v0.7h-0.7zM730.7 141.0h0.6v0.6h-0.6zM743.4 126.0h1.1v1.1h-1.1zM726.5 146.3h0.8v0.8h-0.8zM735.9 132.8h0.7v0.7h-0.7zM747.6 139.2h0.8v0.8h-0.8zM729.7 142.1h0.6v0.6h-0.6zM737.9 142.9h0.8v0.8h-0.8zM741.3 140.5h0.6v0.6h-0.6zM736.8 133.6h0.7v0.7h-0.7zM737.9 132.5h0.7v0.7h-0.7zM744.2 133.1h1.0v1.0h-1.0zM748.9 133.5h1.0v1.0h-1.0zM740.5 130.5h0.6v0.6h-0.6zM754.9 135.4h0.6v0.6h-0.6zM736.5 145.2h0.7v0.7h-0.7zM724.1 146.9h0.6v0.6h-0.6zM755.8 136.6h0.9v0.9h-0.9zM733.7 146.0h0.8v0.8h-0.8zM738.1 151.2h0.8v0.8h-0.8zM746.6 135.4h0.6v0.6h-0.6zM746.8 146.0h1.0v1.0h-1.0zM732.1 143.4h1.0v1.0h-1.0zM734.9 150.5h0.6v0.6h-0.6zM745.9 136.6h0.9v0.9h-0.9zM751.7 140.7h0.9v0.9h-0.9zM753.4 132.3h0.7v0.7h-0.7zM743.0 143.5h0.6v0.6h-0.6zM751.7 134.3h0.8v0.8h-0.8zM735.6 148.5h0.6v0.6h-0.6zM745.5 146.1h0.8v0.8h-0.8zM747.0 132.1h0.6v0.6h-0.6zM746.1 140.4h0.9v0.9h-0.9zM733.2 138.7h1.0v1.0h-1.0zM747.0 143.4h0.7v0.7h-0.7zM742.8 129.4h0.9v0.9h-0.9zM726.4 147.7h1.0v1.0h-1.0zM741.1 131.9h0.5v0.5h-0.5zM746.3 142.5h0.6v0.6h-0.6z" fill="#000"/><path d="M743.0 113.0h0.5v0.5h-0.5zM746.1 116.9h0.9v0.9h-0.9zM741.0 122.6h0.6v0.6h-0.6zM748.5 121.9h0.7v0.7h-0.7zM743.9 121.0h0.6v0.6h-0.6zM744.2 123.3h0.6v0.6h-0.6zM748.6 121.0h0.9v0.9h-0.9zM740.4 109.8h0.9v0.9h-0.9zM748.6 116.5h0.5v0.5h-0.5zM744.8 111.8h0.8v0.8h-0.8zM750.4 117.8h0.8v0.8h-0.8zM746.7 123.3h1.0v1.0h-1.0zM745.0 113.8h0.8v0.8h-0.8zM743.7 110.2h0.8v0.8h-0.8zM740.0 111.7h0.7v0.7h-0.7zM736.9 112.0h0.9v0.9h-0.9zM745.4 113.8h0.7v0.7h-0.7zM741.3 110.4h1.0v1.0h-1.0zM747.6 115.6h1.0v1.0h-1.0zM750.1 120.7h0.9v0.9h-0.9zM742.3 123.8h0.9v0.9h-0.9zM743.5 116.9h0.9v0.9h-0.9zM741.7 109.6h0.9v0.9h-0.9zM739.2 117.3h0.9v0.9h-0.9zM740.8 112.9h0.7v0.7h-0.7zM745.2 113.1h0.7v0.7h-0.7zM742.9 110.7h0.7v0.7h-0.7zM740.2 120.5h1.0v1.0h-1.0zM745.1 114.1h0.7v0.7h-0.7zM743.0 123.1h1.0v1.0h-1.0zM742.4 109.1h0.5v0.5h-0.5zM747.1 114.9h1.0v1.0h-1.0zM745.2 116.0h0.9v0.9h-0.9zM748.7 117.3h0.7v0.7h-0.7zM736.3 114.9h0.6v0.6h-0.6zM745.4 119.5h0.6v0.6h-0.6zM745.5 121.3h0.6v0.6h-0.6zM745.3 125.3h1.0v1.0h-1.0zM746.6 123.0h0.6v0.6h-0.6zM742.2 122.8h0.7v0.7h-0.7z" fill="#000"/><path d="M759.6 141.5h0.9v0.9h-0.9zM780.6 101.6h0.7v0.7h-0.7zM779.1 106.3h0.7v0.7h-0.7zM733.3 130.5h0.8v0.8h-0.8zM735.6 151.3h0.9v0.9h-0.9zM727.2 144.6h0.6v0.6h-0.6zM759.2 107.1h0.5v0.5h-0.5zM777.0 111.7h0.6v0.6h-0.6zM736.3 153.8h0.8v0.8h-0.8zM763.4 111.5h1.0v1.0h-1.0zM778.6 116.7h0.7v0.7h-0.7zM763.5 118.9h0.7v0.7h-0.7zM773.3 126.9h0.7v0.7h-0.7zM749.7 139.5h0.5v0.5h-0.5zM717.3 144.1h0.7v0.7h-0.7zM782.9 111.0h0.9v0.9h-0.9zM740.1 119.9h0.8v0.8h-0.8zM770.3 106.1h0.9v0.9h-0.9zM739.8 151.8h0.8v0.8h-0.8zM737.9 117.7h0.6v0.6h-0.6zM744.4 113.3h0.8v0.8h-0.8zM773.8 125.5h0.7v0.7h-0.7zM719.9 151.3h0.5v0.5h-0.5zM750.5 147.0h0.6v0.6h-0.6zM726.4 147.3h0.6v0.6h-0.6zM747.7 127.3h0.9v0.9h-0.9zM749.5 116.3h0.7v0.7h-0.7zM759.9 128.0h0.7v0.7h-0.7zM741.3 144.0h0.9v0.9h-0.9zM764.6 137.2h0.9v0.9h-0.9zM741.4 139.5h0.6v0.6h-0.6zM750.0 143.1h0.8v0.8h-0.8zM736.6 153.0h0.8v0.8h-0.8zM754.3 114.0h0.8v0.8h-0.8zM748.4 145.7h0.8v0.8h-0.8zM771.8 119.5h0.8v0.8h-0.8zM740.5 147.2h0.9v0.9h-0.9zM753.1 109.3h0.9v0.9h-0.9zM767.1 109.6h0.9v0.9h-0.9zM756.7 137.3h0.7v0.7h-0.7zM760.6 140.3h0.5v0.5h-0.5zM727.2 124.7h0.8v0.8h-0.8zM731.3 138.4h0.8v0.8h-0.8zM742.6 134.3h0.8v0.8h-0.8zM732.6 150.6h0.5v0.5h-0.5zM744.4 115.6h0.7v0.7h-0.7zM724.1 146.6h0.7v0.7h-0.7zM722.6 130.5h0.7v0.7h-0.7zM773.3 123.5h0.9v0.9h-0.9zM761.0 120.7h0.6v0.6h-0.6zM757.7 131.6h1.0v1.0h-1.0zM740.6 150.0h0.5v0.5h-0.5zM723.6 131.7h0.8v0.8h-0.8zM725.8 135.2h0.9v0.9h-0.9zM742.3 124.2h0.6v0.6h-0.6zM736.4 154.5h0.7v0.7h-0.7zM757.7 114.6h1.0v1.0h-1.0zM750.7 123.3h0.7v0.7h-0.7zM736.0 126.7h0.6v0.6h-0.6zM759.5 124.8h0.6v0.6h-0.6zM735.2 152.4h0.9v0.9h-0.9zM733.2 115.0h0.6v0.6h-0.6zM758.6 126.6h0.8v0.8h-0.8zM758.3 141.6h0.6v0.6h-0.6zM769.2 116.8h0.8v0.8h-0.8zM739.5 116.6h0.8v0.8h-0.8zM748.5 120.2h0.9v0.9h-0.9zM757.4 102.0h0.6v0.6h-0.6zM747.9 151.3h0.9v0.9h-0.9zM770.5 124.0h0.8v0.8h-0.8zM765.6 135.4h0.7v0.7h-0.7zM743.4 147.7h0.6v0.6h-0.6zM736.8 146.5h0.5v0.5h-0.5zM746.3 116.0h0.9v0.9h-0.9zM779.7 108.0h0.7v0.7h-0.7zM754.4 127.9h0.7v0.7h-0.7zM726.7 132.8h0.9v0.9h-0.9zM719.4 147.2h0.6v0.6h-0.6zM765.9 107.5h0.6v0.6h-0.6zM780.3 108.4h0.8v0.8h-0.8zM745.0 109.0h0.8v0.8h-0.8zM742.5 104.0h0.5v0.5h-0.5zM756.3 141.6h0.9v0.9h-0.9zM738.0 133.6h0.7v0.7h-0.7zM719.9 139.0h0.6v0.6h-0.6zM760.2 128.3h1.0v1.0h-1.0zM754.8 134.8h0.6v0.6h-0.6zM754.6 114.2h0.9v0.9h-0.9zM752.2 107.5h0.6v0.6h-0.6zM742.0 141.3h0.6v0.6h-0.6zM722.0 137.4h0.5v0.5h-0.5zM724.7 133.3h0.6v0.6h-0.6zM738.6 144.6h0.5v0.5h-0.5zM766.8 103.0h0.6v0.6h-0.6zM731.6 106.5h1.0v1.0h-1.0zM725.8 135.0h0.7v0.7h-0.7zM732.5 118.7h0.8v0.8h-0.8zM740.4 121.6h0.6v0.6h-0.6zM772.3 124.3h0.9v0.9h-0.9zM752.2 133.2h0.8v0.8h-0.8zM767.8 122.1h0.5v0.5h-0.5zM718.8 149.8h0.7v0.7h-0.7zM748.9 149.8h0.8v0.8h-0.8zM746.0 126.1h0.5v0.5h-0.5zM742.2 121.6h0.9v0.9h-0.9zM735.4 109.0h0.6v0.6h-0.6zM732.5 127.0h0.5v0.5h-0.5zM763.2 126.4h1.0v1.0h-1.0zM724.3 137.4h0.6v0.6h-0.6zM737.8 126.2h0.6v0.6h-0.6zM761.2 124.1h1.0v1.0h-1.0zM770.5 123.0h0.5v0.5h-0.5zM752.3 119.6h0.5v0.5h-0.5zM721.0 150.3h0.7v0.7h-0.7zM781.5 103.0h0.6v0.6h-0.6zM744.5 117.1h0.5v0.5h-0.5zM728.6 128.5h0.7v0.7h-0.7zM753.2 104.7h0.7v0.7h-0.7zM723.6 130.3h1.0v1.0h-1.0zM753.8 127.2h0.8v0.8h-0.8zM742.4 135.0h0.9v0.9h-0.9zM779.9 117.2h0.7v0.7h-0.7zM773.8 112.5h0.6v0.6h-0.6zM737.8 104.9h0.9v0.9h-0.9zM773.4 117.5h0.6v0.6h-0.6zM756.4 113.7h0.5v0.5h-0.5zM765.0 102.7h0.6v0.6h-0.6zM736.0 120.9h0.5v0.5h-0.5zM745.4 117.6h0.9v0.9h-0.9zM756.2 124.8h0.9v0.9h-0.9zM734.7 145.5h0.7v0.7h-0.7zM763.3 116.0h0.5v0.5h-0.5zM769.5 131.2h0.5v0.5h-0.5zM741.0 148.1h1.0v1.0h-1.0zM758.8 112.9h0.7v0.7h-0.7zM741.4 118.5h0.5v0.5h-0.5zM766.9 105.3h0.8v0.8h-0.8zM728.0 139.7h0.7v0.7h-0.7zM746.4 124.7h0.9v0.9h-0.9zM723.2 145.6h0.7v0.7h-0.7zM749.7 149.4h0.7v0.7h-0.7zM731.1 115.5h0.6v0.6h-0.6zM755.4 120.0h0.9v0.9h-0.9zM732.9 119.7h0.6v0.6h-0.6zM744.1 108.0h0.9v0.9h-0.9zM730.0 144.6h0.7v0.7h-0.7zM751.8 132.9h0.6v0.6h-0.6zM743.2 117.8h0.5v0.5h-0.5zM737.8 121.4h0.7v0.7h-0.7zM765.2 122.3h1.0v1.0h-1.0zM753.6 144.7h0.7v0.7h-0.7zM757.5 138.0h0.8v0.8h-0.8zM735.9 104.4h0.5v0.5h-0.5zM740.9 132.5h0.9v0.9h-0.9zM766.0 117.2h1.0v1.0h-1.0zM735.2 140.1h0.5v0.5h-0.5zM730.6 128.9h0.9v0.9h-0.9zM732.7 154.6h0.8v0.8h-0.8zM743.3 110.0h0.8v0.8h-0.8zM758.9 121.7h0.6v0.6h-0.6zM764.2 131.0h0.9v0.9h-0.9zM742.2 149.7h0.6v0.6h-0.6zM737.4 115.0h0.8v0.8h-0.8zM778.8 109.4h0.8v0.8h-0.8zM769.7 112.6h0.5v0.5h-0.5zM745.2 123.8h0.8v0.8h-0.8zM779.3 116.9h0.6v0.6h-0.6zM724.1 131.5h0.8v0.8h-0.8zM757.6 136.2h0.8v0.8h-0.8zM767.0 103.4h0.7v0.7h-0.7z" fill="#fff"/><path d="M782.2 153.3h1.0v1.0h-1.0zM782.8 152.2h0.8v0.8h-0.8zM769.0 152.3h0.8v0.8h-0.8zM774.9 143.0h0.9v0.9h-0.9zM808.1 162.2h0.8v0.8h-0.8zM790.2 144.5h0.5v0.5h-0.5zM769.3 146.3h0.5v0.5h-0.5zM782.7 150.7h0.9v0.9h-0.9zM785.4 155.1h0.7v0.7h-0.7zM792.5 151.1h0.6v0.6h-0.6zM808.9 162.9h0.9v0.9h-0.9zM794.7 147.9h0.6v0.6h-0.6zM774.2 142.5h0.9v0.9h-0.9zM790.8 158.1h0.6v0.6h-0.6zM764.3 148.3h1.0v1.0h-1.0zM772.1 143.2h0.5v0.5h-0.5zM787.4 150.8h0.6v0.6h-0.6zM780.6 145.7h0.6v0.6h-0.6zM807.6 158.7h0.7v0.7h-0.7zM803.4 145.6h0.7v0.7h-0.7zM801.9 155.1h0.6v0.6h-0.6zM776.1 147.5h0.5v0.5h-0.5zM771.9 154.2h0.7v0.7h-0.7zM783.7 153.6h0.9v0.9h-0.9zM769.0 144.4h1.0v1.0h-1.0zM800.1 146.5h0.6v0.6h-0.6zM803.2 154.3h0.7v0.7h-0.7zM765.1 141.9h1.0v1.0h-1.0zM789.2 147.5h0.6v0.6h-0.6zM771.2 153.3h0.9v0.9h-0.9zM790.1 147.2h1.0v1.0h-1.0zM773.2 150.8h0.5v0.5h-0.5zM768.6 149.1h0.8v0.8h-0.8zM766.4 149.0h0.9v0.9h-0.9zM808.0 155.5h0.8v0.8h-0.8zM788.6 144.1h0.5v0.5h-0.5zM783.6 157.1h0.7v0.7h-0.7zM786.8 157.2h1.0v1.0h-1.0zM796.1 156.5h0.9v0.9h-0.9zM804.8 148.7h0.8v0.8h-0.8zM804.1 160.2h0.7v0.7h-0.7zM798.7 160.0h0.8v0.8h-0.8zM790.6 149.4h0.8v0.8h-0.8zM803.1 157.0h0.7v0.7h-0.7zM796.0 153.8h0.7v0.7h-0.7zM789.5 151.6h0.6v0.6h-0.6zM794.2 151.9h0.8v0.8h-0.8zM805.1 146.6h0.5v0.5h-0.5zM769.9 144.7h1.0v1.0h-1.0zM792.3 150.7h0.9v0.9h-0.9zM769.7 150.5h0.9v0.9h-0.9zM804.8 160.4h0.7v0.7h-0.7zM788.6 148.0h0.6v0.6h-0.6zM801.6 156.6h1.0v1.0h-1.0zM773.6 144.7h0.7v0.7h-0.7zM773.5 145.7h0.7v0.7h-0.7zM790.7 151.9h0.7v0.7h-0.7zM788.0 147.8h0.9v0.9h-0.9zM760.9 144.0h0.7v0.7h-0.7zM771.6 144.1h0.5v0.5h-0.5zM790.8 150.8h0.8v0.8h-0.8zM792.1 158.8h1.0v1.0h-1.0zM793.5 145.4h0.7v0.7h-0.7zM783.1 156.7h0.6v0.6h-0.6zM773.3 148.6h0.8v0.8h-0.8zM785.5 154.5h0.9v0.9h-0.9zM805.7 156.9h0.6v0.6h-0.6zM782.2 154.8h1.0v1.0h-1.0zM778.5 153.5h0.9v0.9h-0.9zM782.7 155.3h0.6v0.6h-0.6zM795.4 159.0h0.8v0.8h-0.8zM795.2 145.7h0.9v0.9h-0.9zM808.0 162.5h0.8v0.8h-0.8zM798.7 148.0h1.0v1.0h-1.0zM801.9 148.7h0.5v0.5h-0.5zM781.6 153.1h0.9v0.9h-0.9zM766.9 144.3h0.8v0.8h-0.8zM795.5 159.5h0.8v0.8h-0.8zM806.3 151.8h1.0v1.0h-1.0zM764.2 145.9h0.8v0.8h-0.8z" fill="#000"/><path d="M714.2 153.1h0.9v0.9h-0.9zM711.2 145.5h1.0v1.0h-1.0zM720.7 152.0h0.8v0.8h-0.8zM719.8 142.9h0.8v0.8h-0.8zM704.9 158.1h0.5v0.5h-0.5zM724.6 141.5h0.9v0.9h-0.9zM710.1 148.1h1.0v1.0h-1.0zM727.5 150.2h0.6v0.6h-0.6zM703.4 148.5h0.6v0.6h-0.6zM709.4 152.4h0.6v0.6h-0.6zM705.1 156.3h0.7v0.7h-0.7zM712.6 151.9h0.8v0.8h-0.8zM710.7 147.3h0.9v0.9h-0.9zM720.2 142.3h0.6v0.6h-0.6zM710.9 150.2h1.0v1.0h-1.0zM724.7 148.6h0.8v0.8h-0.8zM706.7 148.5h0.7v0.7h-0.7zM723.2 142.1h0.8v0.8h-0.8zM705.3 153.9h0.5v0.5h-0.5zM708.3 146.9h0.9v0.9h-0.9zM701.6 149.2h0.6v0.6h-0.6zM708.5 149.5h1.1v1.1h-1.1zM705.0 158.5h0.7v0.7h-0.7zM705.7 155.0h1.0v1.0h-1.0zM700.2 145.4h1.0v1.0h-1.0zM710.3 144.8h0.5v0.5h-0.5zM701.2 152.4h1.1v1.1h-1.1zM700.7 146.4h1.0v1.0h-1.0zM725.0 152.8h0.6v0.6h-0.6zM715.8 149.5h0.9v0.9h-0.9zM726.8 143.2h0.7v0.7h-0.7zM726.2 145.6h1.1v1.1h-1.1zM715.5 153.9h0.9v0.9h-0.9zM706.4 145.7h0.7v0.7h-0.7zM720.5 153.9h0.6v0.6h-0.6zM726.6 148.4h0.6v0.6h-0.6zM716.8 152.5h1.1v1.1h-1.1zM712.5 151.8h1.0v1.0h-1.0zM723.7 151.6h0.7v0.7h-0.7zM711.1 154.7h0.8v0.8h-0.8zM700.5 154.2h1.0v1.0h-1.0zM727.3 150.7h1.0v1.0h-1.0zM710.6 146.2h1.1v1.1h-1.1zM720.7 150.8h0.9v0.9h-0.9zM703.7 150.7h0.9v0.9h-0.9zM711.8 144.9h0.7v0.7h-0.7zM709.7 153.7h0.6v0.6h-0.6zM702.7 146.2h0.9v0.9h-0.9zM722.8 153.2h1.1v1.1h-1.1zM714.6 148.9h0.6v0.6h-0.6zM720.0 146.8h0.6v0.6h-0.6zM700.2 147.2h0.7v0.7h-0.7zM706.0 148.6h0.6v0.6h-0.6zM727.6 150.0h0.9v0.9h-0.9zM704.9 149.3h0.9v0.9h-0.9zM725.3 145.0h0.8v0.8h-0.8zM706.8 150.8h1.0v1.0h-1.0zM711.9 153.5h0.9v0.9h-0.9zM720.4 147.0h0.9v0.9h-0.9zM709.7 150.0h0.7v0.7h-0.7zM706.8 150.9h0.7v0.7h-0.7zM701.4 156.1h0.7v0.7h-0.7zM726.9 146.4h0.6v0.6h-0.6zM712.4 152.4h0.7v0.7h-0.7zM712.2 147.6h0.7v0.7h-0.7zM712.0 156.1h0.6v0.6h-0.6zM706.2 145.1h1.1v1.1h-1.1zM724.6 147.2h0.9v0.9h-0.9zM706.3 157.6h0.5v0.5h-0.5zM721.5 145.9h0.6v0.6h-0.6z" fill="#000"/><path d="M699.0 169.8h0.8v0.8h-0.8zM733.3 156.8h0.6v0.6h-0.6zM726.6 155.4h0.8v0.8h-0.8zM696.4 159.7h0.7v0.7h-0.7zM716.7 163.2h0.7v0.7h-0.7zM708.9 160.2h0.6v0.6h-0.6zM691.8 169.6h0.7v0.7h-0.7zM714.3 158.6h0.7v0.7h-0.7zM719.1 162.3h0.6v0.6h-0.6zM712.5 158.1h0.6v0.6h-0.6zM695.3 161.5h0.5v0.5h-0.5zM738.1 153.1h0.6v0.6h-0.6zM721.1 156.2h0.7v0.7h-0.7zM730.6 157.3h0.9v0.9h-0.9zM696.3 168.0h0.8v0.8h-0.8zM718.3 161.3h0.9v0.9h-0.9zM703.8 159.7h0.6v0.6h-0.6zM723.7 154.9h0.6v0.6h-0.6zM688.0 168.7h0.8v0.8h-0.8zM709.5 160.9h0.5v0.5h-0.5zM691.0 159.8h0.6v0.6h-0.6zM711.3 161.5h0.9v0.9h-0.9zM714.0 164.3h0.8v0.8h-0.8zM726.8 158.7h0.8v0.8h-0.8zM733.2 158.7h0.8v0.8h-0.8zM704.6 158.4h0.6v0.6h-0.6zM695.8 161.1h0.5v0.5h-0.5zM695.0 164.5h0.8v0.8h-0.8zM703.3 159.5h0.7v0.7h-0.7zM691.9 174.5h0.6v0.6h-0.6zM731.8 157.7h0.7v0.7h-0.7zM691.4 161.4h0.7v0.7h-0.7zM686.5 165.9h0.6v0.6h-0.6zM730.6 160.4h0.9v0.9h-0.9zM734.3 155.9h0.7v0.7h-0.7z" fill="#000"/><path d="M702.9 145.6h0.5v0.5h-0.5zM726.1 133.9h0.6v0.6h-0.6zM706.2 147.0h1.1v1.1h-1.1zM663.7 169.2h0.7v0.7h-0.7zM684.7 167.2h0.6v0.6h-0.6zM689.8 154.3h0.5v0.5h-0.5zM714.4 148.5h0.7v0.7h-0.7zM706.8 149.8h0.7v0.7h-0.7zM679.5 155.6h0.8v0.8h-0.8zM720.6 135.3h0.8v0.8h-0.8zM730.0 143.1h0.9v0.9h-0.9zM707.5 155.8h0.8v0.8h-0.8zM697.9 159.9h0.5v0.5h-0.5zM721.5 134.2h0.6v0.6h-0.6zM736.6 135.2h0.6v0.6h-0.6zM698.8 156.3h0.7v0.7h-0.7zM689.5 155.2h1.1v1.1h-1.1zM664.3 171.2h1.0v1.0h-1.0zM691.4 147.2h0.6v0.6h-0.6zM669.8 168.7h1.1v1.1h-1.1zM697.3 151.2h0.6v0.6h-0.6zM681.2 167.8h0.6v0.6h-0.6zM661.8 173.6h0.8v0.8h-0.8zM715.7 140.5h0.7v0.7h-0.7zM673.4 165.1h0.8v0.8h-0.8zM722.3 143.8h0.6v0.6h-0.6zM678.1 152.8h0.7v0.7h-0.7zM676.3 158.0h1.0v1.0h-1.0zM666.8 159.7h1.0v1.0h-1.0zM723.1 144.0h1.0v1.0h-1.0zM718.0 136.2h0.6v0.6h-0.6zM672.1 171.4h1.0v1.0h-1.0zM671.7 167.7h1.1v1.1h-1.1zM712.6 144.8h0.8v0.8h-0.8zM726.1 138.1h0.7v0.7h-0.7zM706.9 140.4h0.8v0.8h-0.8zM670.5 171.7h0.7v0.7h-0.7zM696.7 156.0h1.0v1.0h-1.0zM700.1 153.5h0.8v0.8h-0.8zM723.9 136.3h0.8v0.8h-0.8zM686.1 152.9h0.8v0.8h-0.8zM722.7 133.1h0.8v0.8h-0.8zM709.0 152.3h0.8v0.8h-0.8zM715.4 149.7h0.8v0.8h-0.8zM735.4 140.5h0.8v0.8h-0.8zM731.8 135.4h0.9v0.9h-0.9zM677.6 173.7h0.7v0.7h-0.7zM726.6 135.8h0.8v0.8h-0.8zM701.2 144.3h0.6v0.6h-0.6zM685.5 162.7h0.5v0.5h-0.5zM704.3 149.1h0.5v0.5h-0.5zM686.5 157.9h0.8v0.8h-0.8zM665.1 175.3h1.0v1.0h-1.0zM722.3 141.0h0.6v0.6h-0.6zM725.5 140.4h0.6v0.6h-0.6z" fill="#fff"/><path d="M770.6 156.9h0.6v0.6h-0.6zM774.2 153.2h0.8v0.8h-0.8zM784.9 144.7h0.6v0.6h-0.6zM801.5 121.2h0.6v0.6h-0.6zM782.9 168.3h0.7v0.7h-0.7zM808.6 119.7h0.9v0.9h-0.9zM781.6 154.3h0.7v0.7h-0.7zM795.4 144.9h0.9v0.9h-0.9zM804.7 149.7h0.6v0.6h-0.6zM786.5 127.2h1.1v1.1h-1.1zM790.5 158.3h1.0v1.0h-1.0zM777.6 136.7h1.0v1.0h-1.0zM770.9 160.3h0.6v0.6h-0.6zM795.4 156.7h1.1v1.1h-1.1zM802.1 145.2h0.6v0.6h-0.6zM771.6 146.7h0.8v0.8h-0.8zM787.3 156.7h0.6v0.6h-0.6zM780.1 131.5h0.8v0.8h-0.8zM781.6 164.4h1.0v1.0h-1.0zM772.7 139.0h0.6v0.6h-0.6zM794.2 172.5h0.6v0.6h-0.6zM798.7 133.4h0.5v0.5h-0.5zM798.6 135.8h0.6v0.6h-0.6zM784.2 129.4h0.7v0.7h-0.7zM784.6 140.2h0.9v0.9h-0.9zM787.9 136.9h1.0v1.0h-1.0zM787.2 157.1h1.1v1.1h-1.1zM771.2 138.4h0.8v0.8h-0.8zM797.7 136.4h1.1v1.1h-1.1zM774.2 166.8h0.5v0.5h-0.5zM807.5 160.0h1.1v1.1h-1.1zM790.5 126.3h1.1v1.1h-1.1zM784.4 120.8h0.9v0.9h-0.9zM786.9 143.4h0.6v0.6h-0.6zM770.4 149.7h0.8v0.8h-0.8zM770.6 141.5h0.9v0.9h-0.9zM796.5 143.3h0.7v0.7h-0.7zM780.9 129.1h0.6v0.6h-0.6zM784.6 122.3h0.9v0.9h-0.9zM796.2 151.5h0.5v0.5h-0.5zM781.0 141.1h0.6v0.6h-0.6zM807.6 159.8h0.8v0.8h-0.8zM796.0 127.6h0.6v0.6h-0.6zM788.1 159.1h0.9v0.9h-0.9zM805.0 159.1h1.1v1.1h-1.1zM808.2 129.0h0.7v0.7h-0.7zM789.1 172.7h0.7v0.7h-0.7zM806.4 165.3h0.8v0.8h-0.8zM792.5 171.5h1.0v1.0h-1.0zM778.0 165.1h0.6v0.6h-0.6zM802.3 134.1h0.7v0.7h-0.7zM792.0 164.9h0.9v0.9h-0.9zM806.2 158.2h1.0v1.0h-1.0zM791.6 137.0h0.8v0.8h-0.8zM786.6 146.7h1.0v1.0h-1.0zM797.3 131.7h0.8v0.8h-0.8zM770.1 164.1h0.7v0.7h-0.7zM777.8 162.6h0.8v0.8h-0.8zM777.2 167.5h0.7v0.7h-0.7zM799.8 159.3h0.6v0.6h-0.6zM800.8 150.6h1.0v1.0h-1.0zM781.2 161.3h1.0v1.0h-1.0zM782.1 154.0h1.0v1.0h-1.0zM808.7 169.4h1.0v1.0h-1.0zM771.0 151.4h0.9v0.9h-0.9zM803.2 168.5h1.1v1.1h-1.1zM769.1 151.2h1.0v1.0h-1.0zM793.7 134.6h0.5v0.5h-0.5zM805.5 165.8h0.9v0.9h-0.9zM781.1 164.0h1.0v1.0h-1.0zM796.9 150.8h0.7v0.7h-0.7zM778.1 136.7h0.7v0.7h-0.7zM787.9 122.6h0.9v0.9h-0.9zM780.3 125.3h0.7v0.7h-0.7zM782.1 141.0h1.0v1.0h-1.0zM798.0 122.3h0.5v0.5h-0.5zM789.5 158.7h1.0v1.0h-1.0zM789.6 135.0h1.0v1.0h-1.0zM797.4 143.8h0.8v0.8h-0.8zM806.0 123.7h0.7v0.7h-0.7z" fill="#fff"/><path d="M770.5 158.2h0.6v0.6h-0.6zM772.7 169.8h0.5v0.5h-0.5zM775.5 163.6h0.5v0.5h-0.5zM765.8 165.5h0.7v0.7h-0.7zM758.1 152.4h0.8v0.8h-0.8zM795.8 163.0h0.9v0.9h-0.9zM766.1 166.4h0.6v0.6h-0.6zM761.0 164.8h0.9v0.9h-0.9zM759.7 154.6h0.6v0.6h-0.6zM748.0 158.3h0.7v0.7h-0.7zM746.3 159.3h1.0v1.0h-1.0zM751.2 163.1h0.6v0.6h-0.6zM776.8 169.7h0.6v0.6h-0.6zM745.5 151.8h0.8v0.8h-0.8zM746.0 151.9h0.7v0.7h-0.7zM795.7 159.2h0.7v0.7h-0.7zM748.0 162.2h0.8v0.8h-0.8zM753.2 155.9h1.0v1.0h-1.0zM783.8 170.9h0.6v0.6h-0.6zM765.1 164.8h0.8v0.8h-0.8zM764.1 169.0h0.8v0.8h-0.8zM769.8 158.8h1.0v1.0h-1.0zM768.8 154.7h0.7v0.7h-0.7zM787.9 167.8h0.7v0.7h-0.7zM785.6 159.4h0.6v0.6h-0.6zM765.5 168.9h0.7v0.7h-0.7zM745.7 151.3h0.6v0.6h-0.6zM766.4 163.5h1.0v1.0h-1.0zM749.8 162.2h0.8v0.8h-0.8zM748.6 159.9h0.9v0.9h-0.9z" fill="#fff"/><path d="M748.7 157.8 L751.0 160.0 L756.0 163.8" fill="none" stroke="#fff" stroke-width="0.8" stroke-linecap="round" stroke-linejoin="round" /><path d="M700.0 176.4 L706.0 174.4 L712.0 172.0" fill="none" stroke="#fff" stroke-width="0.8" stroke-linecap="round" stroke-linejoin="round" /><path d="M775.0 157.0 L770.0 160.0 L767.0 164.0" fill="none" stroke="#fff" stroke-width="0.9" stroke-linecap="round" stroke-linejoin="round" /><path d="M796.0 166.0 L794.0 170.0 L791.0 172.5" fill="none" stroke="#fff" stroke-width="0.8" stroke-linecap="round" stroke-linejoin="round" /><path d="M805.0 165.0 L803.0 169.0" fill="none" stroke="#fff" stroke-width="0.8" stroke-linecap="round" stroke-linejoin="round" /><path d="M714.0 174.0 L712.0 178.0 L710.0 181.0 L710.0 186.0 L711.0 189.0" fill="none" stroke="#fff" stroke-width="0.7" stroke-linecap="round" stroke-linejoin="round" /><path d="M703.0 192.0 L707.0 191.0 L712.0 188.0 L716.0 184.0" fill="none" stroke="#fff" stroke-width="1.6" stroke-linecap="round" stroke-linejoin="round" /><path d="M693.0 197.4 L694.2 194.2 L700.0 193.0 L705.0 190.4 L710.0 187.2" fill="none" stroke="#fff" stroke-width="1.4" stroke-linecap="round" stroke-linejoin="round" /><path d="M700.0 172.0 L699.0 178.0 L700.0 181.4" fill="none" stroke="#fff" stroke-width="0.6" stroke-linecap="round" stroke-linejoin="round" /><path d="M735.0 166.0 L730.0 168.5 L726.0 172.0 L722.0 176.0" fill="none" stroke="#fff" stroke-width="0.9" stroke-linecap="round" stroke-linejoin="round" /><path d="M742.0 162.0 L738.0 163.4 L735.0 166.0" fill="none" stroke="#fff" stroke-width="1.2" stroke-linecap="round" stroke-linejoin="round" /><path d="M663.0 186.0 L660.0 189.0 L656.0 190.0 L652.0 189.4 L650.0 186.0 L648.0 184.0" fill="none" stroke="#fff" stroke-width="1.2" stroke-linecap="round" stroke-linejoin="round" /><path d="M662.6 184.6 L665.0 188.0 L668.0 193.0 L672.0 196.0" fill="none" stroke="#fff" stroke-width="1.5" stroke-linecap="round" stroke-linejoin="round" /><path d="M642.5 188.6 L646.0 187.0 L649.0 186.6 L652.0 188.6 L656.0 190.6 L654.0 193.8 L648.0 194.6 L644.0 193.0Z" fill="#fff"/><path d="M644.0 190.0 L637.0 188.0 L632.0 187.0 L627.0 186.2" fill="none" stroke="#fff" stroke-width="1.0" stroke-linecap="round" stroke-linejoin="round" /><path d="M665.0 188.0 L668.0 193.0" fill="none" stroke="#fff" stroke-width="1.0" stroke-linecap="round" stroke-linejoin="round" /><path d="M660.6 203.6 L664.0 200.8 L667.4 198.8 L670.0 197.0" fill="none" stroke="#fff" stroke-width="1.1" stroke-linecap="round" stroke-linejoin="round" /><path d="M674.0 211.6 L673.4 218.2 L670.6 222.2" fill="none" stroke="#fff" stroke-width="1.0" stroke-linecap="round" stroke-linejoin="round" /><path d="M652.7 228.8 L652.0 234.6" fill="none" stroke="#fff" stroke-width="0.7" stroke-linecap="round" stroke-linejoin="round" opacity="0.8" /><path d="M616.0 176.2 L617.2 178.4 L615.2 178.0" fill="none" stroke="#fff" stroke-width="0.8" stroke-linecap="round" stroke-linejoin="round" /><path d="M582.0 208.0 L582.6 211.0" fill="none" stroke="#fff" stroke-width="0.6" stroke-linecap="round" stroke-linejoin="round" opacity="0.75" /><path d="M583.8 217.0 L584.4 219.0" fill="none" stroke="#fff" stroke-width="0.6" stroke-linecap="round" stroke-linejoin="round" opacity="0.75" /><path d="M587.0 223.0 L589.0 225.0" fill="none" stroke="#fff" stroke-width="0.6" stroke-linecap="round" stroke-linejoin="round" opacity="0.75" /><path d="M577.6 230.0 L582.0 236.5" fill="none" stroke="#fff" stroke-width="0.6" stroke-linecap="round" stroke-linejoin="round" opacity="0.75" /><path d="M586.5 233.0 L587.5 235.5" fill="none" stroke="#fff" stroke-width="0.6" stroke-linecap="round" stroke-linejoin="round" opacity="0.75" /><path d="M573.5 243.0 L574.5 245.2" fill="none" stroke="#fff" stroke-width="0.6" stroke-linecap="round" stroke-linejoin="round" opacity="0.75" /><path d="M594.8 244.6 L594.6 253.8" fill="none" stroke="#fff" stroke-width="0.6" stroke-linecap="round" stroke-linejoin="round" opacity="0.75" /><path d="M590.4 257.6 L588.8 263.0" fill="none" stroke="#fff" stroke-width="0.6" stroke-linecap="round" stroke-linejoin="round" opacity="0.75" /><path d="M586.5 265.0 L586.0 267.5" fill="none" stroke="#fff" stroke-width="0.6" stroke-linecap="round" stroke-linejoin="round" opacity="0.75" /><path d="M585.6 273.5 L585.2 276.5" fill="none" stroke="#fff" stroke-width="0.6" stroke-linecap="round" stroke-linejoin="round" opacity="0.75" /><path d="M588.6 280.0 L589.2 283.0" fill="none" stroke="#fff" stroke-width="0.6" stroke-linecap="round" stroke-linejoin="round" opacity="0.75" /><path d="M572.6 257.6 L573.4 259.4" fill="none" stroke="#fff" stroke-width="0.6" stroke-linecap="round" stroke-linejoin="round" opacity="0.75" /><path d="M589.0 287.2 L582.0 298.2 L586.0 302.4 L583.0 308.0 L579.0 312.8 L575.5 320.0 L571.0 327.4 L572.4 332.8 L577.4 338.2 L582.0 340.0 L583.8 343.0 L582.2 345.0 L585.0 348.0 L589.0 352.0 L592.9 351.0 L593.0 347.4 L596.0 346.0 L600.0 348.0 L603.8 352.0 L607.0 354.8 L611.0 355.0 L613.0 358.4 L613.8 362.0 L618.0 363.0 L622.0 365.6 L625.0 369.0 L628.0 370.0 L631.0 367.6 L634.0 364.0 L638.4 364.8 L643.0 363.8 L645.8 360.0 L649.0 358.4 L653.0 361.0 L655.8 361.4 L660.0 357.4 L664.0 355.0 L669.0 352.0 L674.0 351.0 L677.0 353.0 L679.4 353.0 L682.0 349.8 L686.4 348.8 L691.0 349.0 L695.5 350.0 L698.0 353.8 L702.0 358.0 L706.0 360.0 L709.0 357.8 L711.0 353.0 L713.8 349.8 L717.0 351.0 L720.0 350.0 L722.0 344.8" fill="none" stroke="#fff" stroke-width="0.85" stroke-linecap="round" stroke-linejoin="round" opacity="0.92" /><path d="M722.0 344.8 L724.0 339.6 L726.0 337.0 L728.8 338.0 L732.0 340.0 L734.8 337.8 L737.8 336.4 L740.8 337.8 L745.6 337.0 L751.0 336.0 L753.8 332.8 L757.0 329.8 L760.0 332.0 L763.0 334.0 L766.6 335.6 L771.0 336.0 L774.8 334.8 L776.0 331.0 L778.5 328.0 L779.4 323.8 L780.2 321.0 L784.0 319.8 L788.0 319.5 L792.0 319.0 L794.0 320.6 L796.0 319.6 L798.0 319.5" fill="none" stroke="#fff" stroke-width="1.35" stroke-linecap="round" stroke-linejoin="round" /><path d="M798.0 319.5 L803.0 319.0 L809.5 318.5" fill="none" stroke="#fff" stroke-width="1.9" stroke-linecap="round" stroke-linejoin="round" /><path d="M792.0 319.0 L793.4 317.8 L795.4 318.4 L795.0 320.4" fill="none" stroke="#fff" stroke-width="0.6" stroke-linecap="round" stroke-linejoin="round" /><path d="M740.8 337.8 L741.0 344.6 L741.6 347.4" fill="none" stroke="#fff" stroke-width="1.1" stroke-linecap="round" stroke-linejoin="round" /><path d="M741.6 347.4 L743.0 349.4 L741.0 356.4 L739.0 363.0 L736.6 370.0 L734.8 377.4 L733.8 383.0 L735.0 387.0" fill="none" stroke="#fff" stroke-width="0.7" stroke-linecap="round" stroke-linejoin="round" opacity="0.8" stroke-dasharray="0.8 1.9"/><path d="M722.0 344.8 L720.0 352.0 L717.0 358.4 L713.0 363.8 L709.0 369.0 L704.8 374.8" fill="none" stroke="#fff" stroke-width="0.65" stroke-linecap="round" stroke-linejoin="round" opacity="0.75" stroke-dasharray="0.7 2"/><path d="M704.8 374.8 L703.0 380.0 L700.0 380.8 L697.3 378.4 L693.8 381.0 L691.0 384.8 L687.4 387.4 L683.0 388.2" fill="none" stroke="#fff" stroke-width="0.9" stroke-linecap="round" stroke-linejoin="round" /><path d="M757.0 330.0 L759.0 327.6 L762.4 329.4 L765.0 332.4" fill="none" stroke="#fff" stroke-width="0.7" stroke-linecap="round" stroke-linejoin="round" /><path d="M652.0 283.0 L653.0 288.4 L656.6 292.0 L659.0 289.2 L664.0 288.4" fill="none" stroke="#fff" stroke-width="0.9" stroke-linecap="round" stroke-linejoin="round" /><path d="M656.6 292.0 L658.6 296.6" fill="none" stroke="#fff" stroke-width="0.7" stroke-linecap="round" stroke-linejoin="round" /><path d="M628.6 342.8 L629.6 345.0 L628.6 349.0" fill="none" stroke="#fff" stroke-width="1.0" stroke-linecap="round" stroke-linejoin="round" /><path d="M730.0 289.0 L732.6 292.0 L738.0 290.4 L743.8 287.8 L747.5 285.9 L744.4 284.0 L741.5 281.4 L741.5 285.4 L737.0 288.0 L733.0 288.5Z" fill="#fff"/><path d="M789.0 275.2 L790.4 278.0" fill="none" stroke="#fff" stroke-width="1.2" stroke-linecap="round" stroke-linejoin="round" /><path d="M548.0 386.4 L550.0 388.4 L553.0 388.4 L552.4 386.8 L550.0 387.0Z" fill="#fff"/><path d="M570.4 387.6 L571.4 388.4" fill="none" stroke="#fff" stroke-width="0.9" stroke-linecap="round" stroke-linejoin="round" /><path d="M790.4 250.5h0.7v0.7h-0.7zM798.4 281.7h0.9v0.9h-0.9zM783.8 227.4h0.5v0.5h-0.5zM776.9 260.6h0.5v0.5h-0.5zM798.5 227.1h0.7v0.7h-0.7zM795.7 288.1h0.9v0.9h-0.9zM783.4 216.0h1.2v1.2h-1.2zM776.8 219.7h1.1v1.1h-1.1zM781.1 257.4h0.7v0.7h-0.7zM782.7 222.8h0.5v0.5h-0.5zM802.2 227.3h1.0v1.0h-1.0zM803.6 276.7h1.0v1.0h-1.0zM787.6 274.3h0.6v0.6h-0.6zM782.3 283.6h0.6v0.6h-0.6zM805.1 289.3h0.8v0.8h-0.8zM776.6 247.9h0.8v0.8h-0.8zM808.7 241.7h0.5v0.5h-0.5zM808.6 252.1h0.8v0.8h-0.8zM786.1 276.1h0.7v0.7h-0.7zM789.1 257.9h0.9v0.9h-0.9zM767.2 221.2h0.7v0.7h-0.7zM805.3 237.9h0.9v0.9h-0.9zM773.6 214.8h0.5v0.5h-0.5zM799.5 278.8h0.8v0.8h-0.8zM792.9 269.2h1.1v1.1h-1.1zM806.9 243.7h1.2v1.2h-1.2zM807.0 261.1h1.1v1.1h-1.1zM783.0 240.7h0.7v0.7h-0.7zM802.7 220.4h0.5v0.5h-0.5zM799.1 278.5h0.8v0.8h-0.8zM800.7 210.0h0.7v0.7h-0.7zM772.8 244.9h0.6v0.6h-0.6zM803.9 298.4h1.0v1.0h-1.0zM782.4 229.0h1.2v1.2h-1.2zM784.8 274.2h0.5v0.5h-0.5zM798.6 288.7h0.9v0.9h-0.9zM779.7 260.2h1.1v1.1h-1.1zM773.7 255.8h0.7v0.7h-0.7zM793.0 295.6h0.5v0.5h-0.5zM788.3 266.2h1.1v1.1h-1.1zM787.8 229.4h0.8v0.8h-0.8zM806.9 291.0h0.6v0.6h-0.6zM791.4 217.0h0.9v0.9h-0.9zM774.5 251.9h0.7v0.7h-0.7zM766.5 222.5h0.8v0.8h-0.8zM794.2 257.3h0.5v0.5h-0.5zM794.3 288.0h1.0v1.0h-1.0zM781.7 211.0h1.0v1.0h-1.0zM770.9 271.2h0.7v0.7h-0.7zM773.8 290.6h0.7v0.7h-0.7zM783.7 257.2h1.2v1.2h-1.2zM783.9 274.8h1.2v1.2h-1.2zM773.8 271.4h0.9v0.9h-0.9zM786.6 211.1h1.1v1.1h-1.1zM807.8 238.7h0.7v0.7h-0.7zM808.7 215.2h0.6v0.6h-0.6zM796.8 247.6h0.9v0.9h-0.9zM780.6 254.2h0.8v0.8h-0.8zM778.5 226.4h0.5v0.5h-0.5zM780.1 228.5h1.0v1.0h-1.0zM799.7 273.8h0.8v0.8h-0.8zM770.1 241.6h0.8v0.8h-0.8zM790.2 296.5h0.6v0.6h-0.6zM782.5 251.7h1.0v1.0h-1.0zM803.4 279.1h0.9v0.9h-0.9zM796.7 268.5h1.1v1.1h-1.1zM793.7 269.9h0.7v0.7h-0.7zM804.8 241.7h0.9v0.9h-0.9zM800.1 296.6h1.2v1.2h-1.2zM773.9 242.2h0.6v0.6h-0.6zM786.2 212.6h0.7v0.7h-0.7zM806.1 275.5h0.8v0.8h-0.8zM793.9 224.6h0.7v0.7h-0.7zM790.7 269.8h0.7v0.7h-0.7zM806.5 235.6h0.7v0.7h-0.7z" fill="#fff" opacity="0.92"/><path d="M767.2 359.3h1.2v1.2h-1.2zM713.4 298.3h1.1v1.1h-1.1zM729.6 327.7h1.1v1.1h-1.1zM711.8 379.3h0.8v0.8h-0.8zM698.5 380.1h0.9v0.9h-0.9zM699.4 372.5h1.0v1.0h-1.0zM778.1 355.1h1.2v1.2h-1.2zM691.4 385.5h0.9v0.9h-0.9zM720.1 350.8h0.7v0.7h-0.7zM767.4 359.6h0.9v0.9h-0.9zM701.7 329.6h0.7v0.7h-0.7zM779.2 381.4h1.0v1.0h-1.0zM753.1 308.3h1.0v1.0h-1.0zM721.5 387.7h0.6v0.6h-0.6zM805.2 293.4h1.0v1.0h-1.0zM731.2 347.1h0.8v0.8h-0.8zM726.6 334.0h1.1v1.1h-1.1zM732.0 326.6h1.0v1.0h-1.0zM711.1 326.3h0.9v0.9h-0.9zM751.6 308.3h1.0v1.0h-1.0zM748.2 300.8h0.7v0.7h-0.7zM696.8 325.0h0.6v0.6h-0.6zM720.3 345.4h1.0v1.0h-1.0zM725.7 336.5h0.9v0.9h-0.9zM759.7 379.1h0.7v0.7h-0.7zM782.0 345.2h1.1v1.1h-1.1zM771.5 292.4h0.5v0.5h-0.5zM784.9 320.4h0.9v0.9h-0.9zM701.6 346.0h0.8v0.8h-0.8zM744.8 292.3h1.1v1.1h-1.1zM790.4 363.2h0.9v0.9h-0.9zM717.0 310.4h1.1v1.1h-1.1zM729.2 328.8h1.1v1.1h-1.1zM731.0 387.3h0.6v0.6h-0.6zM791.3 320.3h0.6v0.6h-0.6zM745.0 371.1h0.6v0.6h-0.6zM760.8 374.2h0.5v0.5h-0.5zM748.4 322.0h0.8v0.8h-0.8zM788.9 334.0h0.7v0.7h-0.7zM714.2 370.4h0.6v0.6h-0.6zM775.1 387.6h1.0v1.0h-1.0zM797.2 304.0h0.9v0.9h-0.9zM762.4 299.6h0.8v0.8h-0.8zM726.4 304.1h0.8v0.8h-0.8zM700.3 380.3h0.6v0.6h-0.6zM755.0 360.1h0.5v0.5h-0.5zM802.0 380.3h0.9v0.9h-0.9zM752.0 373.7h0.9v0.9h-0.9zM716.4 381.3h0.6v0.6h-0.6zM756.5 344.4h1.0v1.0h-1.0zM733.5 352.9h0.6v0.6h-0.6zM772.8 307.5h0.7v0.7h-0.7zM752.0 361.7h1.1v1.1h-1.1zM804.6 337.2h0.5v0.5h-0.5zM760.8 347.9h1.0v1.0h-1.0zM695.7 368.4h0.6v0.6h-0.6zM789.0 386.1h0.9v0.9h-0.9zM743.3 355.2h0.6v0.6h-0.6zM768.3 373.6h1.2v1.2h-1.2zM773.5 360.9h1.2v1.2h-1.2zM735.5 324.3h1.2v1.2h-1.2zM697.5 325.2h1.0v1.0h-1.0zM802.1 368.6h0.6v0.6h-0.6zM785.0 313.2h0.9v0.9h-0.9zM763.1 386.4h0.7v0.7h-0.7zM731.6 321.6h0.7v0.7h-0.7zM709.6 330.7h0.7v0.7h-0.7zM721.2 372.0h0.6v0.6h-0.6zM744.9 296.0h0.5v0.5h-0.5zM791.0 367.3h1.2v1.2h-1.2zM703.2 366.6h0.7v0.7h-0.7zM783.9 346.4h0.8v0.8h-0.8zM763.7 316.8h0.9v0.9h-0.9zM790.2 353.9h1.0v1.0h-1.0zM805.0 303.9h1.0v1.0h-1.0zM804.2 343.8h0.7v0.7h-0.7zM766.0 302.6h1.0v1.0h-1.0zM778.3 294.4h0.9v0.9h-0.9zM748.8 362.2h0.8v0.8h-0.8zM700.1 294.1h0.7v0.7h-0.7zM701.4 309.1h0.9v0.9h-0.9zM795.3 308.9h0.9v0.9h-0.9zM747.9 354.0h1.2v1.2h-1.2zM734.3 348.3h0.8v0.8h-0.8zM708.0 336.6h1.2v1.2h-1.2zM777.8 311.2h0.7v0.7h-0.7zM712.9 331.4h0.8v0.8h-0.8zM706.1 333.4h1.2v1.2h-1.2zM736.7 353.3h1.2v1.2h-1.2zM735.8 324.7h0.8v0.8h-0.8zM709.1 298.7h0.6v0.6h-0.6zM771.7 366.9h1.0v1.0h-1.0zM706.9 319.2h1.1v1.1h-1.1zM775.9 329.4h1.0v1.0h-1.0zM721.9 301.0h1.1v1.1h-1.1zM792.6 339.4h0.8v0.8h-0.8zM798.9 345.5h1.2v1.2h-1.2zM691.2 354.2h0.7v0.7h-0.7zM775.0 380.3h0.5v0.5h-0.5zM769.9 370.3h0.8v0.8h-0.8zM704.6 339.5h1.0v1.0h-1.0zM754.0 346.1h0.7v0.7h-0.7zM728.9 315.4h1.0v1.0h-1.0zM691.4 349.3h1.0v1.0h-1.0zM743.3 332.5h1.0v1.0h-1.0zM749.8 297.5h1.0v1.0h-1.0zM805.6 386.3h1.1v1.1h-1.1zM695.2 345.9h0.6v0.6h-0.6zM788.2 304.3h0.9v0.9h-0.9zM796.4 310.5h1.0v1.0h-1.0zM806.1 334.1h0.8v0.8h-0.8zM699.7 379.7h0.6v0.6h-0.6zM779.1 361.1h0.7v0.7h-0.7zM806.8 381.0h0.9v0.9h-0.9zM739.7 338.8h0.8v0.8h-0.8zM768.6 386.8h0.6v0.6h-0.6zM723.4 343.0h0.9v0.9h-0.9zM772.7 380.2h1.1v1.1h-1.1zM733.6 331.3h0.9v0.9h-0.9zM800.7 313.1h0.6v0.6h-0.6zM726.7 360.1h0.9v0.9h-0.9zM742.0 339.8h1.0v1.0h-1.0zM791.8 295.4h0.9v0.9h-0.9zM693.9 365.7h0.8v0.8h-0.8zM799.4 358.4h1.0v1.0h-1.0zM747.9 366.0h0.7v0.7h-0.7zM710.2 348.6h0.8v0.8h-0.8zM754.6 369.6h0.9v0.9h-0.9zM770.3 357.6h0.8v0.8h-0.8zM784.9 357.0h0.9v0.9h-0.9zM794.6 355.6h0.8v0.8h-0.8zM719.6 374.1h1.2v1.2h-1.2zM739.8 349.4h0.9v0.9h-0.9zM777.1 343.3h1.0v1.0h-1.0zM784.8 317.1h1.0v1.0h-1.0zM783.0 349.7h1.2v1.2h-1.2zM799.6 315.3h0.8v0.8h-0.8zM795.3 374.1h0.6v0.6h-0.6zM715.9 307.3h1.2v1.2h-1.2zM696.1 369.8h1.0v1.0h-1.0zM748.4 297.8h0.8v0.8h-0.8zM804.5 303.4h0.8v0.8h-0.8zM781.2 315.5h0.7v0.7h-0.7zM751.6 334.7h1.0v1.0h-1.0zM804.2 292.4h1.0v1.0h-1.0zM737.2 303.3h1.0v1.0h-1.0zM775.5 364.3h0.9v0.9h-0.9zM691.8 319.6h1.0v1.0h-1.0zM713.4 356.4h0.7v0.7h-0.7zM756.3 362.4h0.7v0.7h-0.7zM704.0 384.6h0.8v0.8h-0.8zM785.6 305.0h1.0v1.0h-1.0zM784.7 346.3h1.0v1.0h-1.0zM804.2 292.4h0.9v0.9h-0.9zM781.3 375.2h0.9v0.9h-0.9zM767.2 366.6h0.6v0.6h-0.6zM730.5 301.3h0.7v0.7h-0.7zM699.1 309.9h1.0v1.0h-1.0zM712.1 311.8h0.9v0.9h-0.9zM730.5 307.5h0.6v0.6h-0.6zM796.4 343.8h0.6v0.6h-0.6zM717.0 319.3h1.2v1.2h-1.2zM782.3 322.9h0.7v0.7h-0.7zM785.2 328.8h0.8v0.8h-0.8zM733.4 330.9h1.1v1.1h-1.1zM764.5 384.1h0.8v0.8h-0.8zM807.9 360.3h1.1v1.1h-1.1zM742.5 315.1h1.1v1.1h-1.1zM705.7 346.9h0.8v0.8h-0.8zM807.9 362.0h1.0v1.0h-1.0zM697.9 326.3h1.0v1.0h-1.0zM799.0 367.1h1.2v1.2h-1.2zM788.5 342.8h1.2v1.2h-1.2zM714.8 340.3h0.7v0.7h-0.7zM795.8 342.0h0.7v0.7h-0.7zM803.6 315.9h1.1v1.1h-1.1zM760.2 372.3h1.2v1.2h-1.2zM749.8 305.1h0.9v0.9h-0.9zM786.7 307.6h0.6v0.6h-0.6zM704.3 333.8h1.0v1.0h-1.0zM798.8 307.2h0.8v0.8h-0.8zM752.5 375.2h0.5v0.5h-0.5zM693.4 321.3h0.6v0.6h-0.6zM736.1 310.4h1.2v1.2h-1.2zM712.4 377.8h0.7v0.7h-0.7zM703.2 322.4h1.1v1.1h-1.1zM806.9 346.5h1.0v1.0h-1.0zM763.9 357.1h1.1v1.1h-1.1zM767.9 379.4h0.8v0.8h-0.8zM765.3 336.2h0.9v0.9h-0.9zM709.5 368.2h0.9v0.9h-0.9zM783.4 360.7h0.8v0.8h-0.8zM692.1 387.2h0.9v0.9h-0.9zM708.0 347.9h0.7v0.7h-0.7zM717.6 313.4h0.9v0.9h-0.9zM711.1 354.2h0.7v0.7h-0.7zM698.1 369.6h0.5v0.5h-0.5zM747.3 303.6h0.8v0.8h-0.8zM796.7 344.7h1.1v1.1h-1.1zM761.8 315.1h0.6v0.6h-0.6zM788.7 366.2h0.5v0.5h-0.5zM799.3 357.2h1.1v1.1h-1.1zM738.5 368.0h0.8v0.8h-0.8zM764.6 345.2h0.9v0.9h-0.9zM754.8 304.2h0.8v0.8h-0.8zM717.1 299.0h0.8v0.8h-0.8zM714.6 333.0h1.1v1.1h-1.1zM698.8 311.6h1.2v1.2h-1.2zM793.1 378.8h1.0v1.0h-1.0zM752.4 333.1h0.6v0.6h-0.6zM775.8 346.8h0.9v0.9h-0.9zM741.5 365.7h1.0v1.0h-1.0zM762.9 343.7h0.8v0.8h-0.8zM765.5 383.9h0.7v0.7h-0.7zM727.4 372.2h0.7v0.7h-0.7zM748.5 387.0h0.7v0.7h-0.7zM710.5 366.7h0.9v0.9h-0.9zM771.1 378.3h0.8v0.8h-0.8zM742.7 370.3h0.5v0.5h-0.5zM743.9 321.6h1.0v1.0h-1.0zM740.0 300.1h0.9v0.9h-0.9zM807.4 303.9h0.5v0.5h-0.5zM706.1 370.1h0.5v0.5h-0.5zM744.3 364.8h0.8v0.8h-0.8zM693.9 370.9h0.6v0.6h-0.6zM756.8 335.8h0.9v0.9h-0.9zM755.1 380.7h1.1v1.1h-1.1zM804.3 294.6h1.2v1.2h-1.2zM719.6 362.6h0.5v0.5h-0.5zM783.0 374.5h1.1v1.1h-1.1z" fill="#fff" opacity="0.92"/><path d="M699.3 226.1h0.7v0.7h-0.7zM704.6 226.3h0.6v0.6h-0.6zM724.2 233.1h0.6v0.6h-0.6zM759.1 226.1h0.5v0.5h-0.5zM700.6 291.8h0.7v0.7h-0.7zM746.6 271.3h0.5v0.5h-0.5zM709.1 272.8h0.5v0.5h-0.5zM741.9 237.1h0.7v0.7h-0.7zM700.2 250.5h0.5v0.5h-0.5zM720.2 217.8h0.8v0.8h-0.8zM756.1 246.8h0.6v0.6h-0.6zM762.0 271.3h0.5v0.5h-0.5zM704.1 280.2h0.5v0.5h-0.5zM746.5 250.8h0.4v0.4h-0.4z" fill="#fff" opacity="0.8"/><path d="M683.9 312.4h0.4v0.4h-0.4zM689.8 316.2h0.5v0.5h-0.5zM639.5 330.4h0.8v0.8h-0.8zM578.6 384.4h0.6v0.6h-0.6zM632.2 382.0h0.7v0.7h-0.7zM679.0 362.3h0.4v0.4h-0.4zM672.8 351.9h0.6v0.6h-0.6zM572.6 374.8h0.7v0.7h-0.7zM681.0 368.1h0.9v0.9h-0.9zM627.1 361.5h0.7v0.7h-0.7zM582.5 384.2h0.6v0.6h-0.6zM658.3 384.0h0.7v0.7h-0.7zM565.6 372.6h0.7v0.7h-0.7zM571.8 304.3h0.7v0.7h-0.7zM549.7 381.4h0.7v0.7h-0.7zM620.0 336.0h0.7v0.7h-0.7zM677.9 327.0h0.6v0.6h-0.6zM629.5 326.2h0.7v0.7h-0.7zM623.8 338.1h0.7v0.7h-0.7zM621.6 307.8h0.9v0.9h-0.9zM596.6 338.0h0.6v0.6h-0.6zM679.8 383.8h0.7v0.7h-0.7zM603.1 308.5h0.8v0.8h-0.8zM569.9 348.1h0.6v0.6h-0.6zM592.6 331.4h0.5v0.5h-0.5zM660.4 356.9h0.5v0.5h-0.5zM645.6 304.6h0.6v0.6h-0.6zM665.1 381.0h0.6v0.6h-0.6zM667.7 343.9h0.7v0.7h-0.7zM629.8 387.2h0.8v0.8h-0.8zM613.6 364.0h0.7v0.7h-0.7zM596.3 369.0h0.8v0.8h-0.8zM633.2 383.0h0.4v0.4h-0.4zM617.5 355.8h0.6v0.6h-0.6zM569.8 360.9h0.6v0.6h-0.6zM584.0 303.7h0.9v0.9h-0.9zM596.1 310.4h0.5v0.5h-0.5zM582.0 376.2h0.5v0.5h-0.5zM585.1 308.6h0.6v0.6h-0.6zM575.1 330.3h0.8v0.8h-0.8zM679.1 373.4h0.4v0.4h-0.4zM599.8 374.7h0.4v0.4h-0.4zM574.5 343.1h0.6v0.6h-0.6zM653.8 363.2h0.6v0.6h-0.6zM581.1 320.3h0.5v0.5h-0.5zM554.5 358.6h0.5v0.5h-0.5zM674.0 356.8h0.4v0.4h-0.4zM617.3 353.1h0.4v0.4h-0.4zM615.6 302.6h0.8v0.8h-0.8zM687.9 374.5h0.5v0.5h-0.5zM622.5 312.3h0.6v0.6h-0.6zM670.3 372.0h0.4v0.4h-0.4zM600.1 356.3h0.5v0.5h-0.5zM661.4 378.6h0.7v0.7h-0.7zM597.5 374.7h0.7v0.7h-0.7zM572.3 324.4h0.5v0.5h-0.5zM666.6 344.9h0.7v0.7h-0.7zM663.5 385.7h0.5v0.5h-0.5zM603.8 376.9h0.8v0.8h-0.8zM601.1 357.7h0.5v0.5h-0.5zM568.5 304.5h0.6v0.6h-0.6zM579.2 345.6h0.9v0.9h-0.9zM567.2 349.1h0.8v0.8h-0.8zM631.8 346.4h0.8v0.8h-0.8zM548.2 383.5h0.7v0.7h-0.7zM662.0 372.6h0.4v0.4h-0.4zM618.2 382.6h0.9v0.9h-0.9zM604.7 354.8h0.8v0.8h-0.8zM593.2 385.4h0.9v0.9h-0.9zM650.4 379.3h0.8v0.8h-0.8zM639.6 328.3h0.5v0.5h-0.5zM579.6 305.0h0.9v0.9h-0.9zM588.3 302.1h0.6v0.6h-0.6zM560.0 339.2h0.6v0.6h-0.6zM570.4 342.0h0.6v0.6h-0.6zM596.3 371.6h0.6v0.6h-0.6zM623.5 377.3h0.9v0.9h-0.9zM599.3 303.6h0.9v0.9h-0.9zM619.6 319.1h0.5v0.5h-0.5zM579.7 327.3h0.5v0.5h-0.5zM552.1 387.5h0.8v0.8h-0.8zM561.4 342.3h0.8v0.8h-0.8zM618.2 306.1h0.6v0.6h-0.6zM600.2 380.5h0.7v0.7h-0.7zM611.6 355.5h0.4v0.4h-0.4zM644.5 371.1h0.7v0.7h-0.7zM597.3 325.2h0.4v0.4h-0.4zM610.7 368.5h0.5v0.5h-0.5zM613.5 356.0h0.7v0.7h-0.7zM548.0 381.0h0.7v0.7h-0.7zM589.0 321.1h0.7v0.7h-0.7zM680.3 329.7h0.6v0.6h-0.6zM625.8 315.4h0.6v0.6h-0.6zM678.0 349.0h0.8v0.8h-0.8zM583.0 376.4h0.8v0.8h-0.8zM577.7 346.6h0.7v0.7h-0.7zM628.1 353.0h0.5v0.5h-0.5zM625.3 331.2h0.8v0.8h-0.8zM599.0 386.2h0.7v0.7h-0.7zM578.0 336.6h0.5v0.5h-0.5zM651.8 304.0h0.7v0.7h-0.7zM589.7 368.4h0.5v0.5h-0.5zM643.7 362.8h0.5v0.5h-0.5zM563.9 332.8h0.7v0.7h-0.7zM582.8 300.8h0.6v0.6h-0.6zM662.3 313.9h0.9v0.9h-0.9zM618.7 314.1h0.5v0.5h-0.5zM598.8 341.9h0.5v0.5h-0.5zM557.2 344.1h0.5v0.5h-0.5zM609.4 339.7h0.7v0.7h-0.7zM628.7 320.1h0.5v0.5h-0.5zM669.5 304.4h0.5v0.5h-0.5zM555.1 372.7h0.7v0.7h-0.7zM678.9 355.1h0.6v0.6h-0.6zM607.4 364.4h0.5v0.5h-0.5z" fill="#fff" opacity="0.8"/><path d="M691.7 294.9h0.8v0.8h-0.8zM599.2 259.2h0.6v0.6h-0.6zM648.3 213.0h0.5v0.5h-0.5zM638.9 222.1h0.6v0.6h-0.6zM592.7 208.6h0.7v0.7h-0.7zM636.3 251.3h0.7v0.7h-0.7zM629.5 205.8h0.7v0.7h-0.7zM654.8 265.8h0.6v0.6h-0.6zM696.8 236.3h0.7v0.7h-0.7zM630.6 257.2h0.7v0.7h-0.7zM624.6 208.6h0.6v0.6h-0.6zM669.0 259.1h0.6v0.6h-0.6zM660.7 218.2h0.5v0.5h-0.5zM625.6 281.6h0.5v0.5h-0.5zM602.6 209.9h0.4v0.4h-0.4zM620.3 257.3h0.7v0.7h-0.7zM626.4 237.0h0.5v0.5h-0.5zM623.5 277.8h0.6v0.6h-0.6zM618.4 210.7h0.7v0.7h-0.7zM667.8 282.9h0.5v0.5h-0.5zM650.0 291.9h0.6v0.6h-0.6zM694.0 216.7h0.8v0.8h-0.8zM596.2 241.6h0.4v0.4h-0.4zM679.1 268.7h0.8v0.8h-0.8zM678.5 294.9h0.6v0.6h-0.6zM698.7 274.9h0.5v0.5h-0.5zM697.2 237.7h0.5v0.5h-0.5zM598.3 246.6h0.5v0.5h-0.5z" fill="#fff" opacity="0.75"/><path d="M569.2 330.2h0.5v0.5h-0.5zM575.0 310.8h0.7v0.7h-0.7zM556.8 327.7h0.5v0.5h-0.5zM569.1 326.7h0.7v0.7h-0.7zM563.8 331.0h0.8v0.8h-0.8zM574.2 327.2h0.6v0.6h-0.6zM561.1 333.6h0.4v0.4h-0.4zM570.2 330.3h0.5v0.5h-0.5zM561.5 314.2h0.6v0.6h-0.6zM562.3 331.8h0.8v0.8h-0.8z" fill="#fff" opacity="0.8"/><path d="M652.8 206.6h0.7v0.7h-0.7zM630.0 200.2h0.7v0.7h-0.7zM605.9 209.6h0.5v0.5h-0.5zM642.8 148.8h0.6v0.6h-0.6zM617.4 179.0h0.7v0.7h-0.7zM671.7 191.4h0.6v0.6h-0.6zM715.5 120.8h0.5v0.5h-0.5zM736.2 173.1h0.4v0.4h-0.4zM681.6 147.7h0.5v0.5h-0.5zM622.5 153.0h0.4v0.4h-0.4zM678.8 159.2h0.5v0.5h-0.5zM722.5 104.7h0.5v0.5h-0.5zM714.4 125.4h0.6v0.6h-0.6zM678.3 150.1h0.6v0.6h-0.6zM670.7 155.5h0.4v0.4h-0.4zM714.3 132.5h0.4v0.4h-0.4zM657.2 193.7h0.7v0.7h-0.7zM664.0 155.0h0.5v0.5h-0.5zM686.5 140.3h0.4v0.4h-0.4zM695.8 201.5h0.7v0.7h-0.7zM733.1 143.0h0.5v0.5h-0.5zM680.0 171.2h0.6v0.6h-0.6zM663.3 134.9h0.6v0.6h-0.6zM664.1 178.4h0.6v0.6h-0.6zM649.7 213.4h0.4v0.4h-0.4zM705.8 148.0h0.7v0.7h-0.7zM699.1 165.1h0.6v0.6h-0.6zM704.5 129.8h0.4v0.4h-0.4zM713.6 168.0h0.4v0.4h-0.4zM672.7 118.8h0.7v0.7h-0.7zM637.9 208.1h0.6v0.6h-0.6zM611.0 147.0h0.8v0.8h-0.8zM698.1 117.8h0.5v0.5h-0.5zM683.1 179.9h0.5v0.5h-0.5zM677.3 199.0h0.8v0.8h-0.8zM727.7 137.5h0.5v0.5h-0.5zM711.8 130.4h0.7v0.7h-0.7zM696.7 133.7h0.6v0.6h-0.6zM640.5 192.7h0.5v0.5h-0.5zM638.3 198.6h0.5v0.5h-0.5z" fill="#fff" opacity="0.8"/><path d="M766.3 70.1h0.5v0.5h-0.5zM741.5 62.8h0.7v0.7h-0.7zM769.2 62.1h0.7v0.7h-0.7zM677.6 66.5h0.6v0.6h-0.6zM661.0 62.2h0.4v0.4h-0.4zM741.4 88.1h0.7v0.7h-0.7zM783.8 81.2h0.7v0.7h-0.7zM727.6 62.9h0.4v0.4h-0.4zM807.4 64.5h0.6v0.6h-0.6zM799.2 95.3h0.6v0.6h-0.6zM680.5 64.1h0.5v0.5h-0.5zM802.1 77.4h0.8v0.8h-0.8zM768.6 98.8h0.8v0.8h-0.8zM757.9 77.4h0.6v0.6h-0.6zM705.9 61.6h0.4v0.4h-0.4zM735.9 86.1h0.8v0.8h-0.8zM777.8 61.7h0.4v0.4h-0.4zM712.6 74.6h0.6v0.6h-0.6z" fill="#fff" opacity="0.7"/></g></svg>
<div id="pm" class="a"></div><div id="pmbar" class="a"></div><div id="pmtab" class="a"></div>
<div class="t" style="left:265px;top:396.2px;font-size:6.1px;color:#000;letter-spacing:0.128px;-webkit-text-stroke:0.3px currentColor;">Pin Manager</div>
<div class="a" style="left:265.4px;top:406.8px;width:723.6px;height:138.4px;background:#f0f0f0;border:0.7px solid #a9a9b2;box-sizing:border-box;"></div>
<div class="a" style="left:266.6px;top:408px;width:30.1px;height:12px;background:#fff;"></div>
<div class="t" style="left:267.9px;top:411.6px;font-size:6.0px;color:#111;letter-spacing:-1.602px;">X</div>
<div class="a" style="left:297.9px;top:408px;width:30.4px;height:12px;background:#fff;"></div>
<div class="t" style="left:299.8px;top:411.6px;font-size:6.0px;color:#111;letter-spacing:-1.402px;">Y</div>
<div class="a" style="left:329.7px;top:408px;width:41.3px;height:12px;background:#fff;"></div>
<div class="t" style="left:331.6px;top:411.6px;font-size:6.0px;color:#111;letter-spacing:-0.137px;">Lon</div>
<div class="a" style="left:372.2px;top:408px;width:41.4px;height:12px;background:#fff;"></div>
<div class="t" style="left:374.4px;top:411.6px;font-size:6.0px;color:#111;letter-spacing:-0.047px;">Lat</div>
<div class="a" style="left:414.9px;top:408px;width:41.1px;height:12px;background:#fff;"></div>
<div class="t" style="left:417px;top:411.6px;font-size:6.0px;color:#111;letter-spacing:-0.148px;">Color</div>
<div class="a" style="left:457.4px;top:408px;width:41.6px;height:12px;background:#fff;"></div>
<div class="t" style="left:459.4px;top:411.6px;font-size:6.0px;color:#111;letter-spacing:-0.176px;">Label</div>
<svg style="left:0;top:0" width="1024" height="560" viewBox="0 0 1024 560"><path d="M305.8 397.3l3.2 3.4M309 397.3l-3.2 3.4" stroke="#222" stroke-width="0.75"/><path d="M1013 399.5h5.6" stroke="#222" stroke-width="0.8"/><path d="M993.4 408.6h5l2.6 2.6v7.2h-7.6z" fill="#c9cdf4" stroke="#6a6e9a" stroke-width="0.6"/><path d="M993.8 409h2.4v9h-2.4z" fill="#eef0fb"/><path d="M998.6 415.6h4.6M1000.9 413.4v4.6M999.2 414l3.4 3.4M1002.6 414l-3.4 3.4" stroke="#444" stroke-width="0.7"/><path d="M1007 408.8h4.4l2 2v5.8h-6.4z" fill="#8e8e8e"/><path d="M1010.4 411.2h4.6l2.4 2.4v5.6h-7z" fill="#9c9c9c" stroke="#f0f0f0" stroke-width="0.5"/><path d="M992.6 423h6.4v7.6l-2.2 2.8-1-2.4h-3.2z" fill="#8e8e8e"/><path d="M1000.6 422.6l2.6 1-4.6 9.4-1.4-2.4z" fill="#9a9a9a"/><rect x="1006.8" y="422.6" width="10.8" height="11" fill="none" stroke="#555" stroke-width="0.6" stroke-dasharray="1 0.8"/><path d="M1009.6 426h5.4v6.6h-5.4zM1008.8 425h7v1.2h-7zM1011 423.8h2.6v1.2h-2.6z" fill="#8e8e8e"/><path d="M996.4 437v5.6h-1.8l2.8 3.2 2.8-3.2h-1.8v-5.6z" fill="#9aa0e4" stroke="#3a3f8a" stroke-width="0.5"/><path d="M993 443.4l1.4-1.4v3.2h6v-3.2l1.4 1.4v4.4h-8.8z" fill="#2c2c34"/><path d="M994 446h6.8v1.4h-6.8z" fill="#8a8a96"/><path d="M1012.2 437.6l3.4 3.6h-2v3h-2.8v-3h-2z" fill="#8e8e8e"/><path d="M1008 442.4l1.4-1v3.6h5.6v-3.6l1.4 1v5.4h-8.4z" fill="#8e8e8e"/><path d="M992.6 452.6h10.8l-4.2 4.8v4.6l-2.4-1.4v-3.2z" fill="#b4b8ec" stroke="#20245a" stroke-width="0.9" stroke-linejoin="round"/><rect x="1007" y="451.8" width="10" height="10.6" fill="#8e8e8e"/><path d="M1008.4 455.2h7.6M1008.4 458.6h7.6" stroke="#a8a8a8" stroke-width="0.7"/><path d="M1016 455.6h2.6v3h-2.6z" fill="#8e8e8e"/><circle cx="996.6" cy="469.6" r="2.8" fill="#8e8e8e"/><path d="M998.4 471.6l3.6 4" stroke="#8e8e8e" stroke-width="1.5"/><path d="M1001 467.4l1.4 1M1002 466.6v2" stroke="#999" stroke-width="0.5"/><path d="M1007 469.6l4.4-2.6 5 3.6 0.6 4-3 2-5.4-3.2z" fill="#8e8e8e"/><path d="M1015.4 466.8c1.2 0 1.8 1 1.4 2.2" stroke="#777" stroke-width="0.6" fill="none"/><circle cx="1012.3" cy="537.3" r="5.4" fill="#4d7cc4" stroke="#3864ac" stroke-width="0.6"/><circle cx="1012" cy="536" r="3.9" fill="#6c97d6"/><text x="1010.1" y="540.3" font-size="8" font-weight="bold" fill="#fff">?</text></svg>
<div class="t" style="left:857px;top:510.8px;font-size:10.4px;color:#c2c2c2;letter-spacing:0.12px;-webkit-text-stroke:0px currentColor;">Activate Windows</div>
<div class="t" style="left:857px;top:525px;font-size:7.3px;color:#cacaca;letter-spacing:0.176px;-webkit-text-stroke:0px currentColor;">Go to Settings to activate Windows.</div>
<div class="a" style="left:0px;top:546.6px;width:1024px;height:13.2px;background:#f0f0f0;"></div>
<div class="a" style="left:768px;top:548.6px;width:0.7px;height:10.4px;background:#c4c4c4;"></div>
<div class="a" style="left:833.7px;top:548.6px;width:0.7px;height:10.4px;background:#c4c4c4;"></div>
<div class="a" style="left:941.5px;top:548.6px;width:0.7px;height:10.4px;background:#c4c4c4;"></div>
<div class="t" style="left:785.2px;top:551.7px;font-size:5.9px;color:#111;letter-spacing:-1.535px;-webkit-text-stroke:0.05px currentColor;">X</div>
<div class="t" style="left:795.8px;top:551.7px;font-size:5.9px;color:#111;letter-spacing:0.05px;-webkit-text-stroke:0.05px currentColor;">-- Y</div>
<div class="t" style="left:814.4px;top:551.7px;font-size:5.9px;color:#111;letter-spacing:-0.265px;-webkit-text-stroke:0.05px currentColor;">--</div>
<div class="t" style="left:862.4px;top:551.7px;font-size:5.9px;color:#111;letter-spacing:-0.067px;-webkit-text-stroke:0.05px currentColor;">Lat</div>
<div class="t" style="left:881.8px;top:551.7px;font-size:5.9px;color:#111;letter-spacing:0.164px;-webkit-text-stroke:0.05px currentColor;">-- Lon</div>
<div class="t" style="left:909.2px;top:551.7px;font-size:5.9px;color:#111;letter-spacing:-0.165px;-webkit-text-stroke:0.05px currentColor;">--</div>
<div class="t" style="left:961.4px;top:551.7px;font-size:5.9px;color:#111;letter-spacing:0.033px;-webkit-text-stroke:0.05px currentColor;">Zoom -- Level --</div>
<div id="taskbar" class="a"></div>
<svg style="left:0;top:0" width="1024" height="576" viewBox="0 0 1024 576"><rect x="256.3" y="559.8" width="19.5" height="16.2" fill="#414a63"/><rect x="199.5" y="575" width="15.0" height="1" fill="#86bdf0"/><rect x="219" y="575" width="15" height="1" fill="#86bdf0"/><rect x="239" y="575" width="15" height="1" fill="#86bdf0"/><rect x="256.3" y="575" width="19.5" height="1" fill="#86bdf0"/><rect x="278" y="575" width="15" height="1" fill="#86bdf0"/><path d="M5.1 564.6l3.5-0.5v3.5h-3.5zM9 564l4.6-0.6v4.2h-4.6zM5.1 568h3.5v3.5l-3.5-0.5zM9 568h4.6v4.2l-4.6-0.6z" fill="#f2f2f2"/><circle cx="30.3" cy="566.2" r="2.9" fill="none" stroke="#f0f0f0" stroke-width="0.9"/><path d="M28.2 568.4l-3.4 3.6" stroke="#f0f0f0" stroke-width="0.9"/><rect x="45" y="564.6" width="4.6" height="6.8" fill="none" stroke="#e6e6e6" stroke-width="0.8"/><path d="M43.6 566v4M51 566v4M52 564.4v1.2M52 567v4.8" stroke="#e6e6e6" stroke-width="0.8"/><rect x="64.6" y="563.4" width="8.2" height="9" fill="#7a1f7a"/><path d="M69.6 565.2c-2.6 0-3.2 3.2-1.4 4.2l-0.6 1.8h2.6z" fill="#f4e6f4"/><circle cx="70" cy="566.4" r="0.8" fill="#7a1f7a"/><path d="M84.2 565.6h8.6l-0.6 6.8h-7.4z" fill="#f4f4f4"/><path d="M86.6 565.6c0-2.4 3.8-2.4 3.8 0" fill="none" stroke="#3a8ee0" stroke-width="0.8"/><rect x="86.4" y="567" width="1.8" height="1.8" fill="#e8483a"/><rect x="88.7" y="567" width="1.8" height="1.8" fill="#5cb83c"/><rect x="86.4" y="569.3" width="1.8" height="1.8" fill="#2f8be0"/><rect x="88.7" y="569.3" width="1.8" height="1.8" fill="#f2b820"/><path d="M104.4 564h3l0.8 1h3.8v6.6h-7.6z" fill="#f0c23c"/><path d="M104.4 566.4h7.6v5.2h-7.6z" fill="#f7d968"/><path d="M106 569h4.4v2.6h-4.4z" fill="#3a8ad8"/><path d="M130.6 564.2l-4.4 3.9 4.4 3.9 1.3-0.6v-6.6z" fill="none" stroke="#2b9bf0" stroke-width="1.2" stroke-linejoin="round"/><path d="M124.6 566.2l0.9-0.7 2.3 1.9M124.6 570l0.9 0.7 2.3-1.9" stroke="#2b9bf0" stroke-width="0.9" fill="none"/><path d="M147.6 563.6h4v5h-2.6z" fill="#4aa8ea"/><path d="M144 570.4l4-2.6 2.6 0.8 0.6 2.6h-6z" fill="#dfe6ee"/><path d="M143.8 571.6h7.2" stroke="#c8d0da" stroke-width="0.8"/><path d="M163.2 566.2l4.1-3 4.1 3v5.8h-8.2z" fill="#2f9ae8"/><path d="M163.2 566.6l4.1 3 4.1-3v5.4h-8.2z" fill="#5bb8f4"/><path d="M163.2 572l3.4-2.8M171.4 572l-3.4-2.8" stroke="#1f78c4" stroke-width="0.5"/><circle cx="187.4" cy="568" r="4.4" fill="#1f8fd8"/><path d="M183.2 569c0.4-3.6 3.4-5.4 6.2-4.6 1.8 0.6 2.6 2 2.4 3.4h-5.2c0 1.6 1.4 2.8 3.6 2.4-1 1.8-4.2 2.4-6 0.8z" fill="#48d46a"/><path d="M185.8 568.4c0.2-1.6 2.6-1.8 3-0.4z" fill="#1b2743"/><circle cx="207" cy="568" r="4.5" fill="#e33b2e"/><path d="M207 568l-3.9 2.2a4.5 4.5 0 0 0 7.8 0z" fill="#2da94f" transform="rotate(0 207 568)"/><path d="M207 568l3.9 2.25a4.5 4.5 0 0 0 0-4.5l-3.9 0z" fill="#fbc116"/><path d="M207 568l-3.9 2.25a4.5 4.5 0 0 0 3.9 2.25a4.5 4.5 0 0 0 3.9-2.25z" fill="#2da94f"/><path d="M207 568h4.5a4.5 4.5 0 0 1-2.6 4.1z" fill="#fbc116"/><circle cx="207" cy="568" r="2" fill="#fff"/><circle cx="207" cy="568" r="1.55" fill="#3f82f0"/><path d="M229.2 564.8l-2.8 2.8-1.2-0.9-0.6 0.4 1.4 1.3-1.4 1.3 0.6 0.4 1.2-0.9 2.8 2.8 1-0.5v-6.2z" fill="#8f6ad0"/><circle cx="246.2" cy="568" r="4.4" fill="#1fa2ec"/><text x="244.1" y="570.6" font-size="7.2" font-weight="bold" fill="#fff">S</text><rect x="262" y="563.6" width="7.6" height="8.6" fill="#1d2b3a"/><rect x="263" y="564.4" width="5.6" height="2.6" fill="#8896a6"/><rect x="266" y="568" width="3.8" height="3.8" fill="#4a86cc"/><rect x="262.8" y="568.6" width="2.6" height="2.6" fill="#3a4d62"/><ellipse cx="284" cy="567" rx="3.6" ry="3" fill="#3fcf4a"/><ellipse cx="287" cy="569.4" rx="3" ry="2.5" fill="#eef2ee"/><path d="M808.6 563.3a4.9 4.9 0 1 0 4.3 7.6a3.6 3.6 0 0 1-4.3-7.6z" fill="#f8c93a"/><path d="M862.8 569.2l2.8-2.8 2.8 2.8" fill="none" stroke="#eee" stroke-width="0.8"/><rect x="880.4" y="565.6" width="4.8" height="3.8" rx="0.6" fill="none" stroke="#f2f2f2" stroke-width="0.85"/><path d="M881.2 564.2h3.2M881.2 571h3.2" stroke="#f2f2f2" stroke-width="0.85"/><rect x="881.8" y="566.8" width="2" height="1.4" fill="#cfd3dc"/><rect x="896.4" y="566" width="6.6" height="3.8" fill="none" stroke="#eee" stroke-width="0.7"/><rect x="897.2" y="566.8" width="2.6" height="2.2" fill="#eee"/><path d="M903.4 567.2v1.4" stroke="#eee" stroke-width="0.7"/><path d="M914.6 571a6 6 0 0 1 6-6M916.4 571a4.2 4.2 0 0 1 4.2-4.2M918.2 571a2.4 2.4 0 0 1 2.4-2.4" fill="none" stroke="#e6e6e6" stroke-width="0.85"/><path d="M914.4 571h6.4v-6.4" fill="none" stroke="#8a8fa0" stroke-width="0.5"/><g fill="none" stroke="#ededed" stroke-width="0.9"><ellipse cx="932.2" cy="569.8" rx="1.8" ry="1.4" transform="rotate(-40 932.2 569.8)"/><ellipse cx="935.8" cy="566.2" rx="1.8" ry="1.4" transform="rotate(-40 935.8 566.2)"/><path d="M932.8 569l2.4-2.2"/></g><path d="M1002.4 564.4h7.4v5.4h-3l-1.6 1.8v-1.8h-2.8z" fill="none" stroke="#eee" stroke-width="0.8"/></svg>
<div class="t" style="left:818.8px;top:565.1px;font-size:7.6px;color:#fff;letter-spacing:-0.595px;-webkit-text-stroke:0px currentColor;">13°C</div>
<div class="t" style="left:838px;top:565.1px;font-size:7.6px;color:#fff;letter-spacing:-0.352px;-webkit-text-stroke:0px currentColor;">Clear</div>
<div class="t" style="left:946px;top:565.4px;font-size:6.3px;color:#fff;letter-spacing:-0.351px;-webkit-text-stroke:0.05px currentColor;">ENG</div>
<div class="t" style="left:965.6px;top:565.4px;font-size:6.4px;color:#fff;letter-spacing:-0.08px;-webkit-text-stroke:0.05px currentColor;">10:53 AM</div>
</body>
</html>
